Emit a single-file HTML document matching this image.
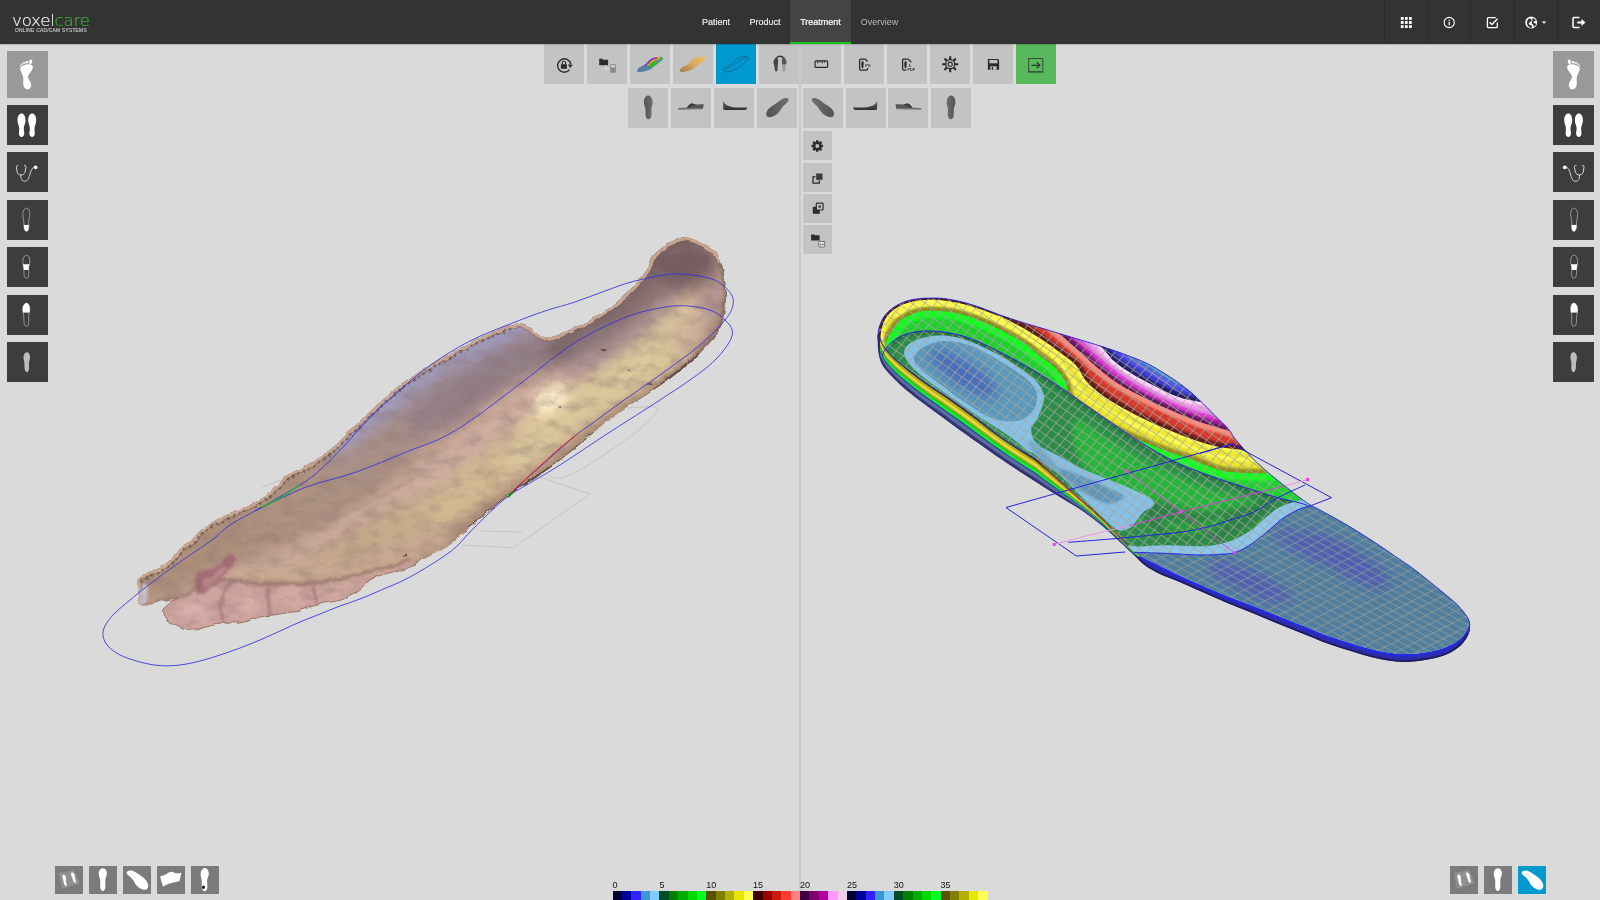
<!DOCTYPE html>
<html lang="en">
<head>
<meta charset="utf-8">
<title>voxelcare - Treatment</title>
<style>
*{box-sizing:border-box;margin:0;padding:0}
html,body{width:1600px;height:900px;overflow:hidden;background:#dadada;font-family:"Liberation Sans",sans-serif;}
#hdr{position:absolute;left:0;top:0;width:1600px;height:43.5px;background:#333;box-shadow:0 .5px 1.5px rgba(0,0,0,.4);z-index:5}
.tab{position:absolute;top:0;height:43.5px;color:#ececec;font-size:9px;line-height:44.6px;-webkit-text-stroke:.2px currentColor;text-align:center;white-space:nowrap}
.tab.act{background:#444;color:#fff;border-bottom:2px solid #17c417}
.tab.dim{color:#b8b8b8;-webkit-text-stroke:0}
.hsep{position:absolute;top:0;width:1px;height:43px;background:#2a2a2a}
.hic{position:absolute;top:0;height:43px}
#logo{position:absolute;left:11.6px;top:11.6px;color:#eee;font-family:"DejaVu Sans","Liberation Sans",sans-serif;font-weight:200;font-size:14.8px;letter-spacing:-0.2px;line-height:17px;white-space:nowrap;-webkit-text-stroke:.22px currentColor;transform:scale(1.125,1.06);transform-origin:0 100%}
#logo b{font-weight:200;color:#3aa832}
#logosub{position:absolute;left:15px;top:27.9px;color:#c4c4c4;font-size:4.9px;letter-spacing:.23px;line-height:6px;white-space:nowrap;font-weight:normal;-webkit-text-stroke:.15px currentColor}
.tb{position:absolute;width:40px;height:40px;background:#c3c3c3}
.tb.blue{background:#0099cf}
.tb.green{background:#57b85c}
.tb svg{position:absolute;left:0;top:0}
.sb{position:absolute;width:29px;height:29px;background:#c3c3c3}
.sb svg{position:absolute;left:0;top:0}
.side{position:absolute;width:40.4px;height:40.4px;background:#3d3d3d}
.side.lt{background:#999;height:47.200px}
.side svg{position:absolute;left:0;top:0}
.bb{position:absolute;width:27.5px;height:27.5px;top:866px;background:#7b7b7b}
.bb.blue{background:#0099cf}
.bb svg{position:absolute;left:0;top:0}
#vdiv{position:absolute;left:799px;top:43px;width:2px;height:857px;background:#c9c9c9}
#scene{position:absolute;left:0;top:0;width:1600px;height:900px}
.lbl{position:absolute;top:879.8px;font-size:9px;line-height:11px;color:#111}
</style>
</head>
<body>
<svg id="scene" width="1600" height="900" viewBox="0 0 1600 900">
<defs>
<clipPath id="footC"><path d="M138.0 590.0C137.8 585.8 137.0 582.0 139.0 579.0C141.0 576.0 145.2 574.8 150.0 572.0C154.8 569.2 163.0 565.8 168.0 562.0C173.0 558.2 176.0 552.7 180.0 549.0C184.0 545.3 188.7 543.0 192.0 540.0C195.3 537.0 195.3 534.7 200.0 531.0C204.7 527.3 211.7 522.3 220.0 518.0C228.3 513.7 241.7 509.3 250.0 505.0C258.3 500.7 263.8 496.8 270.0 492.0C276.2 487.2 281.2 480.3 287.0 476.0C292.8 471.7 297.8 470.3 305.0 466.0C312.2 461.7 321.7 456.7 330.0 450.0C338.3 443.3 347.0 433.7 355.0 426.0C363.0 418.3 370.5 410.8 378.0 404.0C385.5 397.2 393.8 389.8 400.0 385.0C406.2 380.2 409.7 378.5 415.0 375.0C420.3 371.5 426.2 367.5 432.0 364.0C437.8 360.5 442.8 358.0 450.0 354.0C457.2 350.0 467.5 343.8 475.0 340.0C482.5 336.2 489.2 333.5 495.0 331.0C500.8 328.5 505.8 326.2 510.0 325.0C514.2 323.8 516.7 323.5 520.0 324.0C523.3 324.5 526.7 326.2 530.0 328.0C533.3 329.8 536.7 333.4 540.0 335.0C543.3 336.6 545.0 338.3 550.0 337.5C555.0 336.7 563.3 332.9 570.0 330.0C576.7 327.1 583.3 323.8 590.0 320.0C596.7 316.2 604.2 311.7 610.0 307.5C615.8 303.3 620.4 299.2 625.0 295.0C629.6 290.8 633.8 286.7 637.5 282.5C641.2 278.3 644.6 274.1 647.0 270.0C649.4 265.9 649.5 261.7 652.0 258.0C654.5 254.3 658.2 251.0 662.0 248.0C665.8 245.0 671.2 241.8 675.0 240.0C678.8 238.2 680.8 237.2 685.0 237.5C689.2 237.8 695.0 239.8 700.0 242.0C705.0 244.2 711.5 247.7 715.0 251.0C718.5 254.3 719.3 257.2 721.0 262.0C722.7 266.8 724.2 273.7 725.0 280.0C725.8 286.3 726.3 293.3 726.0 300.0C725.7 306.7 724.7 314.2 723.0 320.0C721.3 325.8 719.7 329.7 716.0 335.0C712.3 340.3 706.2 346.7 701.0 352.0C695.8 357.3 691.0 362.0 685.0 367.0C679.0 372.0 671.7 377.3 665.0 382.0C658.3 386.7 651.7 390.7 645.0 395.0C638.3 399.3 631.7 403.4 625.0 408.0C618.3 412.6 611.7 417.2 605.0 422.5C598.3 427.8 592.5 433.8 585.0 440.0C577.5 446.2 568.3 453.6 560.0 460.0C551.7 466.4 543.3 472.8 535.0 478.5C526.7 484.2 517.5 488.8 510.0 494.0C502.5 499.2 496.7 504.5 490.0 510.0C483.3 515.5 476.7 521.3 470.0 527.0C463.3 532.7 456.7 539.3 450.0 544.0C443.3 548.7 437.5 550.8 430.0 555.0C422.5 559.2 412.5 565.8 405.0 569.0C397.5 572.2 390.8 572.2 385.0 574.0C379.2 575.8 374.2 577.3 370.0 580.0C365.8 582.7 365.0 586.7 360.0 590.0C355.0 593.3 346.7 597.7 340.0 600.0C333.3 602.3 326.7 602.3 320.0 604.0C313.3 605.7 306.7 608.3 300.0 610.0C293.3 611.7 286.7 612.8 280.0 614.0C273.3 615.2 266.7 615.5 260.0 617.0C253.3 618.5 246.0 622.2 240.0 623.0C234.0 623.8 229.0 621.5 224.0 622.0C219.0 622.5 215.0 624.7 210.0 626.0C205.0 627.3 199.0 629.8 194.0 630.0C189.0 630.2 184.3 628.7 180.0 627.0C175.7 625.3 170.8 622.8 168.0 620.0C165.2 617.2 162.7 613.0 163.0 610.0C163.3 607.0 167.5 604.0 170.0 602.0C172.5 600.0 179.0 598.2 178.0 598.0C177.0 597.8 169.0 599.3 164.0 600.5C159.0 601.7 152.0 604.4 148.0 605.0C144.0 605.6 141.7 606.5 140.0 604.0C138.3 601.5 138.2 594.2 138.0 590.0Z"/></clipPath>
<filter id="bl8" x="-30%" y="-30%" width="160%" height="160%"><feGaussianBlur stdDeviation="8"/></filter>
<filter id="bl14" x="-30%" y="-30%" width="160%" height="160%"><feGaussianBlur stdDeviation="14"/></filter>
<filter id="bl4" x="-30%" y="-30%" width="160%" height="160%"><feGaussianBlur stdDeviation="4"/></filter>
<filter id="rag" x="-5%" y="-5%" width="110%" height="110%"><feTurbulence type="fractalNoise" baseFrequency="0.11" numOctaves="2" seed="7" result="n"/><feDisplacementMap in="SourceGraphic" in2="n" scale="4.5" xChannelSelector="R" yChannelSelector="G"/></filter>
<filter id="skin" x="0" y="0" width="100%" height="100%"><feTurbulence type="fractalNoise" baseFrequency="0.05 0.09" numOctaves="3" seed="11" result="n"/><feColorMatrix in="n" type="matrix" values="0 0 0 0 0.25  0 0 0 0 0.16  0 0 0 0 0.16  1.5 0 0 0 -0.62"/></filter>
<filter id="bl2" x="-30%" y="-30%" width="160%" height="160%"><feGaussianBlur stdDeviation="1.6"/></filter>
<linearGradient id="footG" gradientUnits="userSpaceOnUse" x1="380" y1="330" x2="470" y2="490"><stop offset="0" stop-color="#8d8195"/><stop offset=".35" stop-color="#a08a8e"/><stop offset=".62" stop-color="#c5a896"/><stop offset=".85" stop-color="#d2bb94"/><stop offset="1" stop-color="#c3a68a"/></linearGradient>
</defs>
<g fill="none" stroke="#c4c4c4" stroke-width="1">
<path d="M262 487L330 462"/>
<path d="M540 477L590 494L513 548L463 545"/>
<path d="M480 531L522 532"/>
<path d="M627 408c12-1 28-2 30 0 3 3 -8 14-22 25-20 15-60 43-74 45-6 1-12-1-12-4"/>
</g>
<g filter="url(#rag)">
<g clip-path="url(#footC)">
<rect x="100" y="220" width="660" height="440" fill="#bc9c88"/>
<path d="M131.0 595.3C128.8 590.6 137.0 579.9 148.0 567.7C159.0 555.5 177.5 536.4 197.0 521.9C216.5 507.4 239.5 499.2 265.0 480.8C290.5 462.4 326.8 419.9 350.0 411.7C373.2 403.5 399.1 416.1 404.5 431.6C409.9 447.1 400.3 484.3 382.5 504.6C364.7 525.0 325.2 540.9 297.5 553.6C269.8 566.3 239.2 574.0 216.5 581.0C193.8 588.1 175.3 593.3 161.0 595.6C146.7 598.0 133.2 599.9 131.0 595.3Z" fill="#ad8f7a" filter="url(#bl8)" opacity="1"/>
<path d="M403.7 408.1C400.5 394.5 410.9 364.1 428.2 347.7C445.5 331.3 484.4 314.2 507.5 309.7C530.5 305.2 547.6 324.7 566.5 320.8C585.4 316.9 607.6 298.3 621.0 286.3C634.4 274.3 639.2 254.8 647.1 248.6C655.0 242.4 665.5 243.5 668.4 249.1C671.3 254.8 670.2 271.0 664.7 282.4C659.2 293.9 649.4 305.1 635.4 317.6C621.4 330.1 599.9 347.2 580.5 357.6C561.1 368.0 541.2 368.1 519.0 380.1C496.8 392.0 466.4 424.5 447.2 429.2C428.0 433.9 406.9 421.6 403.7 408.1Z" fill="#9d8890" filter="url(#bl8)" opacity="1"/>
<path d="M327.6 471.3C323.7 460.4 333.2 432.3 350.0 411.7C366.8 391.1 408.1 356.6 428.2 347.7C448.3 338.8 468.0 346.0 470.9 358.5C473.8 371.0 462.0 402.8 445.7 422.7C429.4 442.5 392.7 469.4 373.0 477.5C353.3 485.6 331.4 482.3 327.6 471.3Z" fill="#a38c8e" filter="url(#bl8)" opacity="0.85"/>
<path d="M241.8 541.3C238.4 533.8 251.1 511.2 270.0 492.0C288.9 472.8 332.8 436.7 355.0 426.0C377.2 415.3 399.9 418.2 403.2 427.7C406.6 437.2 393.9 465.0 375.0 483.2C356.1 501.4 312.2 527.1 290.0 536.8C267.8 546.5 245.1 548.8 241.8 541.3Z" fill="#ad9488" filter="url(#bl8)" opacity="0.6"/>
<path d="M407.9 423.4C406.5 417.4 419.7 399.7 437.3 386.8C454.9 374.0 490.6 353.7 513.5 346.4C536.4 339.1 559.3 342.6 574.9 342.9C590.5 343.2 605.6 345.0 606.9 348.4C608.2 351.8 597.2 357.8 582.6 363.1C568.0 368.4 541.8 370.2 519.0 380.1C496.2 390.0 464.2 415.5 445.7 422.7C427.2 429.9 409.3 429.4 407.9 423.4Z" fill="#8f7b84" filter="url(#bl8)" opacity="0.7"/>
<path d="M320.4 453.9C318.7 449.1 332.0 429.4 350.0 411.7C368.0 394.0 401.9 364.7 428.2 347.7C454.4 330.7 488.0 316.4 507.5 309.7C527.0 303.0 544.3 302.3 545.1 307.4C545.9 312.6 530.7 328.2 512.5 340.3C494.3 352.4 461.2 363.6 435.8 380.3C410.4 397.0 379.2 428.0 360.0 440.3C340.8 452.6 322.0 458.7 320.4 453.9Z" fill="#a09cc2" filter="url(#bl8)" opacity="0.9"/>
<path d="M180.9 596.7C179.6 592.7 195.1 581.7 213.8 572.9C232.5 564.0 265.6 557.0 293.0 543.5C320.4 530.0 351.9 509.2 378.0 491.8C404.1 474.4 425.8 456.6 449.5 439.0C473.1 421.4 497.9 399.1 520.0 386.2C542.1 373.2 562.4 372.1 581.9 361.3C601.4 350.4 621.6 331.1 637.0 321.1C652.4 311.1 664.6 304.5 674.5 301.2C684.5 298.0 694.8 297.7 696.9 301.8C699.0 305.9 694.5 316.4 687.3 325.7C680.1 335.0 669.1 345.9 653.8 357.6C638.5 369.4 616.2 383.3 595.2 396.2C574.2 409.2 550.6 421.0 528.0 435.2C505.4 449.3 482.2 465.7 459.4 481.4C436.5 497.0 416.6 513.7 391.0 529.0C365.4 544.2 334.2 561.4 306.0 572.6C277.8 583.9 242.5 592.5 221.6 596.5C200.7 600.5 182.2 600.6 180.9 596.7Z" fill="#cdaa9e" filter="url(#bl8)" opacity="1"/>
<path d="M364.4 560.4C362.1 554.0 372.6 535.2 388.0 520.4C403.4 505.6 434.0 487.3 457.1 471.6C480.2 455.8 503.8 439.5 526.5 426.0C549.2 412.5 572.3 403.0 593.1 390.7C613.9 378.5 636.2 364.2 651.4 352.4C666.6 340.6 675.2 325.7 684.3 320.0C693.5 314.4 704.1 314.4 706.3 318.6C708.5 322.8 704.9 335.9 697.6 345.4C690.2 355.0 678.0 364.2 662.2 375.9C646.4 387.6 624.0 400.3 602.5 415.6C581.1 430.8 555.8 450.6 533.2 467.3C510.7 484.0 489.3 500.3 467.3 515.6C445.4 530.9 418.7 551.5 401.5 559.0C384.3 566.5 366.6 566.9 364.4 560.4Z" fill="#d2b992" filter="url(#bl8)" opacity="1"/>
<path d="M184.2 609.7C182.8 605.2 198.7 594.0 218.0 585.6C237.3 577.2 272.2 571.5 300.0 559.2C327.8 546.9 363.2 519.3 385.0 511.8C406.8 504.3 428.2 506.9 430.8 514.0C433.2 521.2 419.3 541.6 400.0 554.7C380.7 567.8 343.8 583.1 315.0 592.8C286.2 602.5 248.8 610.1 227.0 612.9C205.2 615.7 185.8 614.3 184.2 609.7Z" fill="#c6a98a" filter="url(#bl8)" opacity="0.9"/>
<path d="M500.1 465.9C498.9 458.0 511.2 435.5 525.5 419.9C539.8 404.3 566.9 387.3 586.1 372.3C605.4 357.3 626.6 342.3 641.0 329.8C655.4 317.3 662.7 301.2 672.6 297.5C682.4 293.7 696.0 299.3 700.1 307.3C704.3 315.3 703.9 334.0 697.6 345.4C691.2 356.9 678.0 364.2 662.2 375.9C646.4 387.6 624.0 400.3 602.5 415.6C581.1 430.8 550.3 458.9 533.2 467.3C516.2 475.7 501.4 473.8 500.1 465.9Z" fill="#dcc69c" filter="url(#bl8)" opacity="1"/>
<path d="M548.5 355.2C546.2 349.0 554.4 332.3 566.5 320.8C578.6 309.3 607.6 298.3 621.0 286.3C634.4 274.3 637.1 257.9 647.1 248.6C657.1 239.3 671.2 233.4 680.7 230.7C690.2 228.0 701.0 228.3 703.9 232.5C706.7 236.7 704.1 246.9 697.9 255.9C691.7 264.9 676.9 275.3 666.7 286.2C656.6 297.1 651.4 309.2 637.0 321.1C622.6 333.0 595.2 351.9 580.5 357.6C565.8 363.3 550.9 361.3 548.5 355.2Z" fill="#766062" filter="url(#bl8)" opacity="0.95"/>
<path d="M556.4 377.8C555.0 374.1 564.8 360.8 577.7 350.2C590.6 339.6 619.6 326.1 633.8 314.1C648.0 302.2 652.7 289.2 662.8 278.7C672.9 268.1 686.0 256.6 694.5 250.9C702.9 245.1 711.8 241.7 713.6 244.2C715.3 246.7 711.3 256.5 704.8 266.0C698.3 275.5 684.8 289.7 674.5 301.2C664.3 312.7 658.1 323.2 643.4 335.0C628.7 346.9 600.6 365.2 586.1 372.3C571.6 379.4 557.8 381.5 556.4 377.8Z" fill="#a98e90" filter="url(#bl8)" opacity="0.9"/>
<ellipse cx="712" cy="318" rx="13" ry="42" transform="rotate(14 712 318)" fill="#b4969a" filter="url(#bl8)"/>
<ellipse cx="690" cy="335" rx="18" ry="26" transform="rotate(40 690 335)" fill="#cdb29a" filter="url(#bl8)" opacity=".9"/>
<path d="M190.0 632.1C189.3 629.9 207.3 623.1 228.5 617.5C249.7 611.8 288.5 607.7 317.5 598.4C346.5 589.1 377.4 575.1 402.5 561.9C427.6 548.6 446.2 534.1 468.1 518.9C490.0 503.6 511.2 487.3 533.8 470.4C556.3 453.4 581.7 432.8 603.2 417.4C624.8 401.9 647.1 389.3 663.0 377.6C678.9 366.0 688.1 360.8 698.5 347.3C709.0 333.8 718.7 308.4 725.9 296.9C733.0 285.3 740.1 276.3 741.2 277.8C742.2 279.4 738.2 292.4 732.3 306.3C726.4 320.2 716.4 347.3 705.9 361.4C695.4 375.5 685.2 379.1 669.0 390.7C652.8 402.3 630.4 414.1 608.5 431.2C586.6 448.3 560.0 474.6 537.5 493.3C515.0 512.0 495.1 528.3 473.8 543.3C452.6 558.3 434.8 571.3 410.0 583.3C385.2 595.3 354.5 607.2 325.0 615.2C295.5 623.2 255.5 628.3 233.0 631.1C210.5 633.9 190.8 634.4 190.0 632.1Z" fill="#a98a72" filter="url(#bl4)" opacity="0.9"/>
<ellipse cx="684" cy="266" rx="36" ry="22" transform="rotate(-15 684 266)" fill="#735c5e" filter="url(#bl8)"/>
<ellipse cx="640" cy="300" rx="36" ry="10" transform="rotate(-40 640 300)" fill="#8a7272" filter="url(#bl8)" opacity=".85"/>
<ellipse cx="590" cy="338" rx="30" ry="8" transform="rotate(-25 590 338)" fill="#8d7a80" filter="url(#bl8)" opacity=".8"/>
<ellipse cx="550" cy="400" rx="22" ry="12" transform="rotate(-35 550 400)" fill="#fbe6c0" filter="url(#bl8)"/>
<ellipse cx="551" cy="400" rx="15" ry="9" transform="rotate(-35 551 400)" fill="#fdebc8" filter="url(#bl4)"/>
<ellipse cx="552" cy="399" rx="9" ry="6" transform="rotate(-35 552 399)" fill="#fff2d4" filter="url(#bl4)"/>
<path d="M196.0 593.0C204.3 590.3 204.0 592.2 208.0 590.0C212.0 587.8 216.0 581.7 220.0 580.0C224.0 578.3 227.7 579.6 232.0 580.0C236.3 580.4 241.0 581.9 246.0 582.5C251.0 583.1 256.3 583.3 262.0 583.5C267.7 583.7 273.7 583.5 280.0 583.5C286.3 583.5 293.3 583.8 300.0 583.5C306.7 583.2 313.3 582.8 320.0 582.0C326.7 581.2 333.3 580.3 340.0 579.0C346.7 577.7 352.5 575.8 360.0 574.0C367.5 572.2 376.7 570.3 385.0 568.0C393.3 565.7 404.2 554.7 410.0 560.0C415.8 565.3 421.7 586.7 420.0 600.0C418.3 613.3 445.0 633.3 400.0 640.0C355.0 646.7 190.3 645.7 150.0 640.0C109.7 634.3 150.3 613.8 158.0 606.0C165.7 598.2 187.7 595.7 196.0 593.0Z" fill="#cfa49f" filter="url(#bl2)"/>
<g filter="url(#bl4)" opacity=".8"><ellipse cx="196" cy="612" rx="18" ry="9" transform="rotate(-12 196 612)" fill="#dcb6b2"/><ellipse cx="248" cy="603" rx="12" ry="9" fill="#d8b4aa"/><ellipse cx="292" cy="598" rx="14" ry="8" fill="#d6b2a6"/><ellipse cx="340" cy="590" rx="16" ry="7" transform="rotate(-12 340 590)" fill="#d0aca0"/></g>
<path d="M240.0 570.0C249.0 567.2 280.0 568.0 300.0 565.0C320.0 562.0 340.0 557.0 360.0 552.0C380.0 547.0 405.0 539.0 420.0 535.0C435.0 531.0 446.7 525.2 450.0 528.0C453.3 530.8 448.3 545.7 440.0 552.0C431.7 558.3 413.3 562.3 400.0 566.0C386.7 569.7 373.3 571.5 360.0 574.0C346.7 576.5 333.3 579.5 320.0 581.0C306.7 582.5 292.3 582.8 280.0 583.0C267.7 583.2 252.7 584.2 246.0 582.0C239.3 579.8 231.0 572.8 240.0 570.0Z" fill="#c9a892" filter="url(#bl4)" opacity=".9"/>
<path d="M198.0 572.0C200.5 569.7 206.3 571.3 210.0 570.0C213.7 568.7 217.0 566.5 220.0 564.0C223.0 561.5 225.3 555.8 228.0 555.0C230.7 554.2 235.8 556.8 236.0 559.0C236.2 561.2 231.5 564.5 229.0 568.0C226.5 571.5 224.5 576.3 221.0 580.0C217.5 583.7 211.8 587.7 208.0 590.0C204.2 592.3 200.2 595.0 198.0 594.0C195.8 593.0 195.0 587.7 195.0 584.0C195.0 580.3 195.5 574.3 198.0 572.0Z" fill="#a36c74" filter="url(#bl2)"/>
<path d="M203.0 578.0C204.3 575.8 208.8 576.8 212.0 575.0C215.2 573.2 219.7 567.8 222.0 567.0C224.3 566.2 227.0 567.5 226.0 570.0C225.0 572.5 219.7 579.0 216.0 582.0C212.3 585.0 206.2 588.7 204.0 588.0C201.8 587.3 201.7 580.2 203.0 578.0Z" fill="#c08c90" filter="url(#bl2)" opacity=".8"/>
<path d="M221.0 580.0C222.8 580.0 227.8 579.6 232.0 580.0C236.2 580.4 241.0 581.9 246.0 582.5C251.0 583.1 256.3 583.3 262.0 583.5C267.7 583.7 273.7 583.5 280.0 583.5C286.3 583.5 293.3 583.8 300.0 583.5C306.7 583.2 313.3 582.8 320.0 582.0C326.7 581.2 333.3 580.3 340.0 579.0C346.7 577.7 352.5 575.8 360.0 574.0C367.5 572.2 376.7 570.3 385.0 568.0C393.3 565.7 405.8 561.3 410.0 560.0" fill="none" stroke="#85605c" stroke-width="2.800" opacity=".7" filter="url(#bl2)"/>
<g fill="none" stroke="#8e5e62" stroke-width="2" opacity=".8" filter="url(#bl2)">
<path d="M232 580c-5 7-10 13-11 22-1 8 1 14 3 20"/><path d="M268 585c-3 8 2 20 2 31"/><path d="M314 585c-1 6 2 12 2 19"/>
</g>
<ellipse cx="143" cy="594" rx="4.500" ry="11" fill="#cfc6dc" filter="url(#bl2)" opacity=".9"/>
<path d="M141.0 604.0C142.5 604.1 146.2 605.2 150.0 604.5C153.8 603.8 159.3 601.2 164.0 600.0C168.7 598.8 173.3 598.8 178.0 597.5C182.7 596.2 189.0 593.9 192.0 592.0C195.0 590.1 195.3 587.0 196.0 586.0" fill="none" stroke="#7c5c58" stroke-width="1.600" opacity=".7" filter="url(#bl2)"/>
<g fill="none" stroke="#fff" stroke-width="1.200" opacity=".16" filter="url(#bl2)"><path d="M470 400c20-8 40-22 60-30"/><path d="M480 412c18-7 36-18 52-26"/><path d="M300 540c30-10 60-30 90-44"/><path d="M420 470c30-16 60-40 90-54"/></g>
<g fill="none" stroke="#5c4650" stroke-width="1.400" opacity=".18" filter="url(#bl2)"><path d="M450 410c20-8 40-22 60-30"/><path d="M330 520c30-10 60-30 90-44"/><path d="M520 360c14-6 24-10 36-12"/></g>
<path d="M470.0 528.0C476.7 522.5 495.0 506.2 510.0 495.0C525.0 483.8 543.3 473.3 560.0 461.0C576.7 448.7 593.3 433.5 610.0 421.0C626.7 408.5 645.0 397.2 660.0 386.0C675.0 374.8 693.3 359.3 700.0 354.0" fill="none" stroke="#453638" stroke-width="3.200" opacity=".85"/>
<path d="M721.0 262.0C721.7 265.0 724.2 273.7 725.0 280.0C725.8 286.3 726.3 293.3 726.0 300.0C725.7 306.7 724.7 314.2 723.0 320.0C721.3 325.8 719.7 329.7 716.0 335.0C712.3 340.3 706.2 346.7 701.0 352.0C695.8 357.3 691.0 362.0 685.0 367.0C679.0 372.0 668.3 379.5 665.0 382.0" fill="none" stroke="#6a5450" stroke-width="5" opacity=".6" filter="url(#bl2)"/>
<rect x="100" y="220" width="660" height="440" filter="url(#skin)" opacity=".55"/>
<g fill="#4c4034" opacity=".75"><ellipse cx="603" cy="350" rx="2.500" ry="1.200"/><ellipse cx="650" cy="385" rx="2" ry="1"/><ellipse cx="405" cy="556" rx="2.500" ry="1.200" transform="rotate(-20 405 556)"/><ellipse cx="628" cy="370" rx="1.500" ry=".8"/><ellipse cx="560" cy="407" rx="1.500" ry=".8"/></g>
</g>
<g clip-path="url(#footC)"><path d="M138.0 590.0C138.2 588.2 137.0 582.0 139.0 579.0C141.0 576.0 145.2 574.8 150.0 572.0C154.8 569.2 163.0 565.8 168.0 562.0C173.0 558.2 176.0 552.7 180.0 549.0C184.0 545.3 188.7 543.0 192.0 540.0C195.3 537.0 195.3 534.7 200.0 531.0C204.7 527.3 211.7 522.3 220.0 518.0C228.3 513.7 241.7 509.3 250.0 505.0C258.3 500.7 263.8 496.8 270.0 492.0C276.2 487.2 281.2 480.3 287.0 476.0C292.8 471.7 297.8 470.3 305.0 466.0C312.2 461.7 321.7 456.7 330.0 450.0C338.3 443.3 347.0 433.7 355.0 426.0C363.0 418.3 370.5 410.8 378.0 404.0C385.5 397.2 393.8 389.8 400.0 385.0C406.2 380.2 409.7 378.5 415.0 375.0C420.3 371.5 426.2 367.5 432.0 364.0C437.8 360.5 442.8 358.0 450.0 354.0C457.2 350.0 467.5 343.8 475.0 340.0C482.5 336.2 489.2 333.5 495.0 331.0C500.8 328.5 505.8 326.2 510.0 325.0C514.2 323.8 516.7 323.5 520.0 324.0C523.3 324.5 526.7 326.2 530.0 328.0C533.3 329.8 536.7 333.4 540.0 335.0C543.3 336.6 545.0 338.3 550.0 337.5C555.0 336.7 563.3 332.9 570.0 330.0C576.7 327.1 583.3 323.8 590.0 320.0C596.7 316.2 604.2 311.7 610.0 307.5C615.8 303.3 620.4 299.2 625.0 295.0C629.6 290.8 633.8 286.7 637.5 282.5C641.2 278.3 644.6 274.1 647.0 270.0C649.4 265.9 649.5 261.7 652.0 258.0C654.5 254.3 658.2 251.0 662.0 248.0C665.8 245.0 671.2 241.8 675.0 240.0C678.8 238.2 680.8 237.2 685.0 237.5C689.2 237.8 695.0 239.8 700.0 242.0C705.0 244.2 711.5 247.7 715.0 251.0C718.5 254.3 720.0 260.2 721.0 262.0" fill="none" stroke="#7a6260" stroke-width="8" opacity=".6"/><path d="M138.0 590.0C138.2 588.2 137.0 582.0 139.0 579.0C141.0 576.0 145.2 574.8 150.0 572.0C154.8 569.2 163.0 565.8 168.0 562.0C173.0 558.2 176.0 552.7 180.0 549.0C184.0 545.3 188.7 543.0 192.0 540.0C195.3 537.0 195.3 534.7 200.0 531.0C204.7 527.3 211.7 522.3 220.0 518.0C228.3 513.7 241.7 509.3 250.0 505.0C258.3 500.7 263.8 496.8 270.0 492.0C276.2 487.2 281.2 480.3 287.0 476.0C292.8 471.7 297.8 470.3 305.0 466.0C312.2 461.7 321.7 456.7 330.0 450.0C338.3 443.3 347.0 433.7 355.0 426.0C363.0 418.3 370.5 410.8 378.0 404.0C385.5 397.2 393.8 389.8 400.0 385.0C406.2 380.2 409.7 378.5 415.0 375.0C420.3 371.5 426.2 367.5 432.0 364.0C437.8 360.5 442.8 358.0 450.0 354.0C457.2 350.0 467.5 343.8 475.0 340.0C482.5 336.2 489.2 333.5 495.0 331.0C500.8 328.5 505.8 326.2 510.0 325.0C514.2 323.8 516.7 323.5 520.0 324.0C523.3 324.5 526.7 326.2 530.0 328.0C533.3 329.8 536.7 333.4 540.0 335.0C543.3 336.6 545.0 338.3 550.0 337.5C555.0 336.7 563.3 332.9 570.0 330.0C576.7 327.1 583.3 323.8 590.0 320.0C596.7 316.2 604.2 311.7 610.0 307.5C615.8 303.3 620.4 299.2 625.0 295.0C629.6 290.8 633.8 286.7 637.5 282.5C641.2 278.3 644.6 274.1 647.0 270.0C649.4 265.9 649.5 261.7 652.0 258.0C654.5 254.3 658.2 251.0 662.0 248.0C665.8 245.0 671.2 241.8 675.0 240.0C678.8 238.2 680.8 237.2 685.0 237.5C689.2 237.8 695.0 239.8 700.0 242.0C705.0 244.2 711.5 247.7 715.0 251.0C718.5 254.3 720.0 260.2 721.0 262.0" fill="none" stroke="#c8a590" stroke-width="6"/></g>
<path d="M430.0 555.0C425.8 557.3 412.5 565.8 405.0 569.0C397.5 572.2 390.8 572.2 385.0 574.0C379.2 575.8 374.2 577.3 370.0 580.0C365.8 582.7 365.0 586.7 360.0 590.0C355.0 593.3 346.7 597.7 340.0 600.0C333.3 602.3 326.7 602.3 320.0 604.0C313.3 605.7 306.7 608.3 300.0 610.0C293.3 611.7 286.7 612.8 280.0 614.0C273.3 615.2 266.7 615.5 260.0 617.0C253.3 618.5 246.0 622.2 240.0 623.0C234.0 623.8 229.0 621.5 224.0 622.0C219.0 622.5 215.0 624.7 210.0 626.0C205.0 627.3 199.0 629.8 194.0 630.0C189.0 630.2 184.3 628.7 180.0 627.0C175.7 625.3 170.8 622.8 168.0 620.0C165.2 617.2 162.7 613.0 163.0 610.0C163.3 607.0 167.5 604.0 170.0 602.0C172.5 600.0 179.0 598.2 178.0 598.0C177.0 597.8 166.3 600.1 164.0 600.5" fill="none" stroke="#8a6a55" stroke-width="1" opacity=".8"/>
<g clip-path="url(#footC)"><path d="M139.0 579.0C140.8 577.8 145.2 574.8 150.0 572.0C154.8 569.2 163.0 565.8 168.0 562.0C173.0 558.2 176.0 552.7 180.0 549.0C184.0 545.3 188.7 543.0 192.0 540.0C195.3 537.0 195.3 534.7 200.0 531.0C204.7 527.3 211.7 522.3 220.0 518.0C228.3 513.7 241.7 509.3 250.0 505.0C258.3 500.7 263.8 496.8 270.0 492.0C276.2 487.2 281.2 480.3 287.0 476.0C292.8 471.7 297.8 470.3 305.0 466.0C312.2 461.7 321.7 456.7 330.0 450.0C338.3 443.3 347.0 433.7 355.0 426.0C363.0 418.3 370.5 410.8 378.0 404.0C385.5 397.2 393.8 389.8 400.0 385.0C406.2 380.2 409.7 378.5 415.0 375.0C420.3 371.5 426.2 367.5 432.0 364.0C437.8 360.5 442.8 358.0 450.0 354.0C457.2 350.0 467.5 343.8 475.0 340.0C482.5 336.2 489.2 333.5 495.0 331.0C500.8 328.5 507.5 326.0 510.0 325.0" fill="none" stroke="#66503f" stroke-width="3" stroke-dasharray="2.500 3.500" opacity=".6" transform="translate(2 3.400)"/></g>
</g>
<path d="M255.0 511.0C250.8 513.3 237.2 520.2 230.0 525.0C222.8 529.8 220.3 533.8 212.0 540.0C203.7 546.2 190.3 554.7 180.0 562.0C169.7 569.3 158.3 577.7 150.0 584.0C141.7 590.3 136.0 595.0 130.0 600.0C124.0 605.0 118.2 609.7 114.0 614.0C109.8 618.3 106.8 622.3 105.0 626.0C103.2 629.7 102.5 632.7 103.0 636.0C103.5 639.3 105.2 642.8 108.0 646.0C110.8 649.2 114.7 652.3 120.0 655.0C125.3 657.7 133.3 660.2 140.0 662.0C146.7 663.8 153.3 665.1 160.0 665.6C166.7 666.1 173.3 665.8 180.0 665.0C186.7 664.2 193.3 662.7 200.0 661.0C206.7 659.3 213.3 657.2 220.0 655.0C226.7 652.8 233.3 650.5 240.0 648.0C246.7 645.5 253.3 642.8 260.0 640.0C266.7 637.2 273.3 634.0 280.0 631.0C286.7 628.0 293.3 624.8 300.0 622.0C306.7 619.2 313.3 616.7 320.0 614.0C326.7 611.3 333.3 608.5 340.0 606.0C346.7 603.5 353.3 601.6 360.0 599.0C366.7 596.4 371.7 594.2 380.0 590.5C388.3 586.8 398.3 583.4 410.0 577.0C421.7 570.6 440.0 559.5 450.0 552.0C460.0 544.5 463.3 538.7 470.0 532.0C476.7 525.3 483.3 518.2 490.0 512.0C496.7 505.8 502.5 500.3 510.0 495.0C517.5 489.7 526.7 485.0 535.0 480.0C543.3 475.0 547.5 473.0 560.0 465.0C572.5 457.0 593.3 442.8 610.0 432.0C626.7 421.2 646.7 408.7 660.0 400.0C673.3 391.3 681.2 386.2 690.0 380.0C698.8 373.8 706.2 368.3 712.5 362.5C718.8 356.7 724.2 350.0 727.5 345.0C730.8 340.0 732.5 336.2 732.5 332.5C732.5 328.8 730.8 326.1 727.5 322.5C724.2 318.9 719.2 313.8 712.5 311.0C705.8 308.2 695.8 306.6 687.5 306.0C679.2 305.4 672.9 305.6 662.5 307.5C652.1 309.4 639.6 311.7 625.0 317.5C610.4 323.3 591.7 332.1 575.0 342.5C558.3 352.9 541.7 367.5 525.0 380.0C508.3 392.5 488.8 407.9 475.0 417.5C461.2 427.1 454.2 431.7 442.5 437.5C430.8 443.3 419.6 446.7 405.0 452.5C390.4 458.3 371.7 466.7 355.0 472.5C338.3 478.3 321.7 481.1 305.0 487.5C288.3 493.9 263.3 507.1 255.0 511.0" fill="none" stroke="#3030e0" stroke-width=".85"/>
<path d="M255.0 511.0C262.5 506.7 289.2 491.8 300.0 485.0C310.8 478.2 312.5 476.7 320.0 470.0C327.5 463.3 337.1 453.3 345.0 445.0C352.9 436.7 358.3 429.2 367.5 420.0C376.7 410.8 389.2 399.3 400.0 390.0C410.8 380.7 420.3 372.2 432.0 364.0C443.7 355.8 457.0 347.7 470.0 341.0C483.0 334.3 497.5 329.0 510.0 324.0C522.5 319.0 534.2 314.7 545.0 311.0C555.8 307.3 565.0 305.3 575.0 302.0C585.0 298.7 595.0 294.5 605.0 291.0C615.0 287.5 623.3 283.8 635.0 281.0C646.7 278.2 662.2 274.3 675.0 274.0C687.8 273.7 702.8 275.9 712.0 279.0C721.2 282.1 726.5 288.2 730.0 292.5C733.5 296.8 733.8 300.4 733.0 305.0C732.2 309.6 730.5 313.3 725.0 320.0C719.5 326.7 710.8 335.8 700.0 345.0C689.2 354.2 673.3 365.3 660.0 375.0C646.7 384.7 631.7 394.7 620.0 403.0C608.3 411.3 597.1 419.8 590.0 425.0C582.9 430.2 584.2 428.5 577.5 434.0C570.8 439.5 558.8 450.3 550.0 458.0C541.2 465.7 531.7 474.0 525.0 480.0C518.3 486.0 512.5 491.7 510.0 494.0" fill="none" stroke="#3030e0" stroke-width=".85"/>
<path d="M577.5 434.0C574.6 436.3 566.2 442.7 560.0 448.0C553.8 453.3 545.8 460.7 540.0 466.0C534.2 471.3 529.7 475.7 525.0 480.0C520.3 484.3 514.2 490.0 512.0 492.0" fill="none" stroke="#f02020" stroke-width="1"/>
<path d="M262.0 507.0C265.0 505.5 273.7 501.7 280.0 498.0C286.3 494.3 296.7 487.2 300.0 485.0" fill="none" stroke="#20c020" stroke-width="1.200"/>
<path d="M508 497l5-5" stroke="#109010" stroke-width="2"/>
<defs>
<clipPath id="silC"><path d="M877.6 339.3C877.6 334.3 878.0 331.0 879.3 326.9C880.6 322.8 882.5 318.1 885.6 314.4C888.7 310.7 893.3 307.2 898.0 304.7C902.7 302.2 907.5 300.4 914.0 299.3C920.5 298.2 929.6 297.7 937.0 298.0C944.4 298.3 951.3 299.4 958.4 301.0C965.5 302.6 972.7 304.9 979.8 307.3C986.9 309.7 993.9 312.8 1001.0 315.3C1008.1 317.8 1015.3 320.2 1022.4 322.4C1029.5 324.6 1036.4 326.5 1043.8 328.7C1051.2 330.9 1058.5 333.3 1066.7 335.8C1075.0 338.3 1084.4 341.0 1093.3 343.8C1102.2 346.6 1111.1 349.4 1120.0 352.7C1128.9 355.9 1138.7 359.4 1146.7 363.3C1154.7 367.2 1161.5 371.7 1168.0 375.8C1174.5 379.9 1180.5 384.1 1185.8 388.2C1191.1 392.3 1195.3 396.2 1200.0 400.7C1204.7 405.1 1209.5 410.2 1214.2 414.9C1218.9 419.6 1224.8 424.9 1228.4 429.0C1232.0 433.1 1231.4 434.6 1235.6 439.6C1239.8 444.6 1247.4 453.1 1253.3 459.0C1259.2 464.9 1265.0 469.9 1271.0 475.0C1277.0 480.1 1283.0 484.7 1289.0 489.3C1295.0 493.9 1300.8 498.9 1306.7 502.7C1312.6 506.5 1318.5 509.1 1324.4 512.4C1330.3 515.6 1336.3 518.8 1342.2 522.2C1348.1 525.6 1354.1 529.3 1360.0 533.0C1365.9 536.7 1371.1 540.0 1377.8 544.4C1384.5 548.8 1393.8 555.3 1400.0 559.6C1406.2 563.9 1408.3 564.9 1415.0 570.0C1421.7 575.1 1432.9 584.2 1440.0 590.0C1447.1 595.8 1452.9 600.4 1457.5 605.0C1462.1 609.6 1465.4 614.2 1467.5 617.5C1469.6 620.8 1469.8 622.2 1470.0 625.0C1470.2 627.8 1470.0 630.7 1468.5 634.0C1467.0 637.3 1464.5 641.7 1461.0 645.0C1457.5 648.3 1453.1 651.6 1447.5 654.0C1441.9 656.4 1435.0 658.2 1427.5 659.5C1420.0 660.8 1410.8 662.2 1402.5 662.0C1394.2 661.8 1385.8 660.2 1377.5 658.5C1369.2 656.8 1360.8 654.0 1352.5 651.5C1344.2 649.0 1335.8 646.5 1327.5 643.5C1319.2 640.5 1310.8 636.8 1302.5 633.5C1294.2 630.2 1285.8 626.9 1277.5 623.5C1269.2 620.1 1260.8 616.4 1252.5 613.0C1244.2 609.6 1235.8 606.5 1227.5 603.0C1219.2 599.5 1210.8 595.7 1202.5 592.0C1194.2 588.3 1184.6 584.0 1177.5 581.0C1170.4 578.0 1165.1 576.4 1160.0 574.0C1154.9 571.6 1150.7 569.4 1146.7 566.6C1142.7 563.8 1140.8 561.4 1136.0 557.0C1131.2 552.6 1124.0 545.5 1118.0 540.0C1112.0 534.5 1106.0 528.9 1100.0 524.0C1094.0 519.1 1088.0 514.6 1082.0 510.5C1076.0 506.4 1069.8 503.1 1064.0 499.5C1058.2 495.9 1055.8 494.6 1047.0 489.0C1038.2 483.4 1022.8 473.7 1011.0 465.8C999.2 457.9 985.3 448.1 976.0 441.5C966.7 434.9 961.5 431.2 955.0 426.5C948.5 421.8 943.0 417.6 937.0 413.2C931.0 408.8 925.2 404.8 919.3 400.3C913.4 395.8 907.2 391.1 901.6 386.0C896.0 380.9 889.3 374.4 885.6 369.6C881.9 364.8 880.6 362.1 879.3 357.0C878.0 351.9 877.6 344.3 877.6 339.3Z"/></clipPath>
<clipPath id="topC"><path d="M877.6 339.3C877.6 337.8 878.0 331.0 879.3 326.9C880.6 322.8 882.5 318.1 885.6 314.4C888.7 310.7 893.3 307.2 898.0 304.7C902.7 302.2 907.5 300.4 914.0 299.3C920.5 298.2 929.6 297.7 937.0 298.0C944.4 298.3 951.3 299.4 958.4 301.0C965.5 302.6 972.7 304.9 979.8 307.3C986.9 309.7 993.9 312.8 1001.0 315.3C1008.1 317.8 1015.3 320.2 1022.4 322.4C1029.5 324.6 1036.4 326.5 1043.8 328.7C1051.2 330.9 1058.5 333.3 1066.7 335.8C1075.0 338.3 1084.4 341.0 1093.3 343.8C1102.2 346.6 1111.1 349.4 1120.0 352.7C1128.9 355.9 1138.7 359.4 1146.7 363.3C1154.7 367.2 1161.5 371.7 1168.0 375.8C1174.5 379.9 1180.5 384.1 1185.8 388.2C1191.1 392.3 1195.3 396.2 1200.0 400.7C1204.7 405.1 1209.5 410.2 1214.2 414.9C1218.9 419.6 1224.8 424.9 1228.4 429.0C1232.0 433.1 1231.4 434.6 1235.6 439.6C1239.8 444.6 1247.4 453.1 1253.3 459.0C1259.2 464.9 1265.0 469.9 1271.0 475.0C1277.0 480.1 1283.0 484.7 1289.0 489.3C1295.0 493.9 1300.8 498.9 1306.7 502.7C1312.6 506.5 1318.5 509.1 1324.4 512.4C1330.3 515.6 1336.3 518.8 1342.2 522.2C1348.1 525.6 1354.1 529.3 1360.0 533.0C1365.9 536.7 1371.1 540.0 1377.8 544.4C1384.5 548.8 1393.8 555.3 1400.0 559.6C1406.2 563.9 1408.3 564.9 1415.0 570.0C1421.7 575.1 1432.9 584.2 1440.0 590.0C1447.1 595.8 1452.9 600.4 1457.5 605.0C1462.1 609.6 1465.4 614.2 1467.5 617.5C1469.6 620.8 1469.8 623.8 1470.0 625.0C1470.2 626.2 1469.7 623.9 1469.0 625.0C1468.3 626.1 1467.7 629.1 1466.0 631.5C1464.3 633.9 1462.3 636.9 1459.0 639.5C1455.7 642.1 1451.2 644.9 1446.0 647.0C1440.8 649.1 1434.8 650.8 1427.5 652.0C1420.2 653.2 1410.8 654.2 1402.5 654.0C1394.2 653.8 1385.8 652.2 1377.5 650.5C1369.2 648.8 1360.8 646.0 1352.5 643.5C1344.2 641.0 1335.8 638.5 1327.5 635.5C1319.2 632.5 1310.8 628.8 1302.5 625.5C1294.2 622.2 1285.8 618.8 1277.5 615.5C1269.2 612.2 1260.8 608.8 1252.5 605.5C1244.2 602.2 1235.8 599.3 1227.5 596.0C1219.2 592.7 1210.6 589.0 1202.5 585.5C1194.4 582.0 1186.5 578.7 1178.7 575.0C1170.9 571.3 1162.1 566.8 1155.6 563.5C1149.1 560.2 1144.2 558.5 1139.6 555.5C1135.0 552.5 1131.6 549.2 1128.0 545.8C1124.4 542.4 1122.5 539.8 1117.8 535.0C1113.1 530.2 1105.9 522.9 1100.0 517.3C1094.1 511.7 1088.1 506.6 1082.2 501.3C1076.3 496.0 1070.3 490.6 1064.4 485.3C1058.5 480.0 1051.4 473.6 1046.7 469.3C1042.0 465.0 1042.0 463.7 1036.0 459.5C1030.0 455.3 1018.1 448.7 1011.0 444.0C1003.9 439.3 998.8 435.6 993.3 431.5C987.8 427.4 982.9 423.3 978.0 419.5C973.1 415.7 969.1 412.6 963.8 408.7C958.5 404.8 951.9 400.2 946.0 396.2C940.1 392.2 934.1 388.8 928.2 384.7C922.3 380.6 916.3 375.9 910.4 371.3C904.5 366.7 897.1 361.1 892.7 357.0C888.3 352.9 886.1 349.9 883.8 346.4C881.5 342.9 880.0 337.0 879.0 335.8C878.0 334.6 877.6 340.8 877.6 339.3Z"/></clipPath>
<pattern id="mesh" width="11.5" height="7.2" patternUnits="userSpaceOnUse" patternTransform="matrix(.875 .485 .891 -.454 900 300)"><path d="M0 3.6H11.5M5.7 0V7.2" stroke="#a4a298" stroke-width=".85" fill="none" opacity=".85"/></pattern>
<pattern id="meshH" width="8.5" height="8" patternUnits="userSpaceOnUse" patternTransform="matrix(.82 .57 .64 -.77 900 300)"><path d="M0 4H8.5M4.2 0V8" stroke="#a8a69a" stroke-width=".85" fill="none" opacity=".85"/></pattern>
<filter id="b3"><feGaussianBlur stdDeviation="3"/></filter>
<filter id="b6" x="-30%" y="-30%" width="160%" height="160%"><feGaussianBlur stdDeviation="6"/></filter>
<filter id="b1"><feGaussianBlur stdDeviation="1.1"/></filter>
</defs>
<g id="insole">
<path d="M877.6 339.3C877.6 334.3 878.0 331.0 879.3 326.9C880.6 322.8 882.5 318.1 885.6 314.4C888.7 310.7 893.3 307.2 898.0 304.7C902.7 302.2 907.5 300.4 914.0 299.3C920.5 298.2 929.6 297.7 937.0 298.0C944.4 298.3 951.3 299.4 958.4 301.0C965.5 302.6 972.7 304.9 979.8 307.3C986.9 309.7 993.9 312.8 1001.0 315.3C1008.1 317.8 1015.3 320.2 1022.4 322.4C1029.5 324.6 1036.4 326.5 1043.8 328.7C1051.2 330.9 1058.5 333.3 1066.7 335.8C1075.0 338.3 1084.4 341.0 1093.3 343.8C1102.2 346.6 1111.1 349.4 1120.0 352.7C1128.9 355.9 1138.7 359.4 1146.7 363.3C1154.7 367.2 1161.5 371.7 1168.0 375.8C1174.5 379.9 1180.5 384.1 1185.8 388.2C1191.1 392.3 1195.3 396.2 1200.0 400.7C1204.7 405.1 1209.5 410.2 1214.2 414.9C1218.9 419.6 1224.8 424.9 1228.4 429.0C1232.0 433.1 1231.4 434.6 1235.6 439.6C1239.8 444.6 1247.4 453.1 1253.3 459.0C1259.2 464.9 1265.0 469.9 1271.0 475.0C1277.0 480.1 1283.0 484.7 1289.0 489.3C1295.0 493.9 1300.8 498.9 1306.7 502.7C1312.6 506.5 1318.5 509.1 1324.4 512.4C1330.3 515.6 1336.3 518.8 1342.2 522.2C1348.1 525.6 1354.1 529.3 1360.0 533.0C1365.9 536.7 1371.1 540.0 1377.8 544.4C1384.5 548.8 1393.8 555.3 1400.0 559.6C1406.2 563.9 1408.3 564.9 1415.0 570.0C1421.7 575.1 1432.9 584.2 1440.0 590.0C1447.1 595.8 1452.9 600.4 1457.5 605.0C1462.1 609.6 1465.4 614.2 1467.5 617.5C1469.6 620.8 1469.8 622.2 1470.0 625.0C1470.2 627.8 1470.0 630.7 1468.5 634.0C1467.0 637.3 1464.5 641.7 1461.0 645.0C1457.5 648.3 1453.1 651.6 1447.5 654.0C1441.9 656.4 1435.0 658.2 1427.5 659.5C1420.0 660.8 1410.8 662.2 1402.5 662.0C1394.2 661.8 1385.8 660.2 1377.5 658.5C1369.2 656.8 1360.8 654.0 1352.5 651.5C1344.2 649.0 1335.8 646.5 1327.5 643.5C1319.2 640.5 1310.8 636.8 1302.5 633.5C1294.2 630.2 1285.8 626.9 1277.5 623.5C1269.2 620.1 1260.8 616.4 1252.5 613.0C1244.2 609.6 1235.8 606.5 1227.5 603.0C1219.2 599.5 1210.8 595.7 1202.5 592.0C1194.2 588.3 1184.6 584.0 1177.5 581.0C1170.4 578.0 1165.1 576.4 1160.0 574.0C1154.9 571.6 1150.7 569.4 1146.7 566.6C1142.7 563.8 1140.8 561.4 1136.0 557.0C1131.2 552.6 1124.0 545.5 1118.0 540.0C1112.0 534.5 1106.0 528.9 1100.0 524.0C1094.0 519.1 1088.0 514.6 1082.0 510.5C1076.0 506.4 1069.8 503.1 1064.0 499.5C1058.2 495.9 1055.8 494.6 1047.0 489.0C1038.2 483.4 1022.8 473.7 1011.0 465.8C999.2 457.9 985.3 448.1 976.0 441.5C966.7 434.9 961.5 431.2 955.0 426.5C948.5 421.8 943.0 417.6 937.0 413.2C931.0 408.8 925.2 404.8 919.3 400.3C913.4 395.8 907.2 391.1 901.6 386.0C896.0 380.9 889.3 374.4 885.6 369.6C881.9 364.8 880.6 362.1 879.3 357.0C878.0 351.9 877.6 344.3 877.6 339.3Z" fill="#2a2a78"/>
<g clip-path="url(#silC)">
<path d="M880.0 337.7L883.0 344.3L886.0 348.7L890.0 353.5L895.0 358.6L900.0 362.6L910.0 370.7L920.0 378.2L930.0 385.6L945.0 395.3L960.0 405.7L975.0 416.9L990.0 428.6L1005.0 439.5L1020.0 449.3L1035.0 458.6L1047.0 469.3L1058.0 479.2L1068.0 488.2L1076.0 495.4L1084.0 502.6L1093.0 510.7L1102.0 519.0L1111.0 527.9L1120.0 537.0L1130.0 547.2L1140.0 555.4L1140.0 556.4L1130.0 548.1L1120.0 538.0L1111.0 529.0L1102.0 520.1L1093.0 511.9L1084.0 503.9L1076.0 496.9L1068.0 489.9L1058.0 481.1L1047.0 471.4L1035.0 461.0L1020.0 451.6L1005.0 441.8L990.0 431.0L975.0 419.4L960.0 408.3L945.0 397.7L930.0 387.9L920.0 380.6L910.0 373.0L900.0 364.9L895.0 360.8L890.0 355.7L886.0 351.0L883.0 346.5L880.0 339.9Z" fill="#4a2418"/>
<path d="M880.0 339.3L883.0 345.9L886.0 350.4L890.0 355.1L895.0 360.2L900.0 364.3L910.0 372.4L920.0 380.0L930.0 387.3L945.0 397.1L960.0 407.7L975.0 418.8L990.0 430.4L1005.0 441.2L1020.0 451.0L1035.0 460.4L1047.0 470.8L1058.0 480.5L1068.0 489.3L1076.0 496.3L1084.0 503.3L1093.0 511.3L1102.0 519.5L1111.0 528.4L1120.0 537.4L1130.0 547.5L1140.0 555.8L1140.0 557.0L1130.0 548.5L1120.0 538.5L1111.0 529.6L1102.0 520.9L1093.0 512.9L1084.0 505.0L1076.0 498.2L1068.0 491.5L1058.0 483.1L1047.0 473.8L1035.0 463.7L1020.0 454.3L1005.0 444.4L990.0 433.7L975.0 422.2L960.0 411.1L945.0 400.6L930.0 390.6L920.0 383.3L910.0 375.6L900.0 367.5L895.0 363.2L890.0 358.1L886.0 353.5L883.0 348.9L880.0 342.4Z" fill="#b8ae20"/>
<path d="M880.0 341.8L883.0 348.3L886.0 352.9L890.0 357.5L895.0 362.6L900.0 366.9L910.0 375.0L920.0 382.7L930.0 390.0L945.0 400.0L960.0 410.5L975.0 421.6L990.0 433.1L1005.0 443.8L1020.0 453.7L1035.0 463.1L1047.0 473.2L1058.0 482.5L1068.0 490.9L1076.0 497.6L1084.0 504.4L1093.0 512.3L1102.0 520.3L1111.0 529.0L1120.0 537.9L1130.0 547.9L1140.0 556.4L1140.0 557.7L1130.0 549.1L1120.0 539.2L1111.0 530.4L1102.0 521.8L1093.0 513.9L1084.0 506.3L1076.0 499.8L1068.0 493.4L1058.0 485.3L1047.0 476.5L1035.0 466.8L1020.0 457.4L1005.0 447.5L990.0 436.8L975.0 425.5L960.0 414.5L945.0 403.9L930.0 393.7L920.0 386.4L910.0 378.7L900.0 370.5L895.0 366.1L890.0 361.0L886.0 356.5L883.0 351.7L880.0 345.2Z" fill="#e4dc38"/>
<path d="M880.0 344.6L883.0 351.1L886.0 355.9L890.0 360.4L895.0 365.5L900.0 369.9L910.0 378.1L920.0 385.8L930.0 393.1L945.0 403.3L960.0 413.9L975.0 424.9L990.0 436.2L1005.0 446.9L1020.0 456.8L1035.0 466.2L1047.0 475.9L1058.0 484.7L1068.0 492.8L1076.0 499.2L1084.0 505.7L1093.0 513.3L1102.0 521.2L1111.0 529.8L1120.0 538.6L1130.0 548.5L1140.0 557.1L1140.0 558.1L1130.0 549.4L1120.0 539.5L1111.0 530.9L1102.0 522.3L1093.0 514.6L1084.0 507.0L1076.0 500.7L1068.0 494.5L1058.0 486.7L1047.0 478.0L1035.0 468.6L1020.0 459.1L1005.0 449.2L990.0 438.6L975.0 427.4L960.0 416.4L945.0 405.7L930.0 395.5L920.0 388.2L910.0 380.4L900.0 372.2L895.0 367.7L890.0 362.6L886.0 358.1L883.0 353.2L880.0 346.9Z" fill="#b4a820"/>
<path d="M880.0 346.3L883.0 352.6L886.0 357.5L890.0 362.0L895.0 367.1L900.0 371.6L910.0 379.8L920.0 387.6L930.0 394.9L945.0 405.1L960.0 415.8L975.0 426.8L990.0 438.0L1005.0 448.6L1020.0 458.5L1035.0 468.0L1047.0 477.4L1058.0 486.1L1068.0 493.9L1076.0 500.1L1084.0 506.4L1093.0 514.0L1102.0 521.7L1111.0 530.3L1120.0 538.9L1130.0 548.8L1140.0 557.5L1140.0 558.4L1130.0 549.7L1120.0 539.9L1111.0 531.3L1102.0 522.8L1093.0 515.2L1084.0 507.8L1076.0 501.6L1068.0 495.5L1058.0 488.0L1047.0 479.6L1035.0 470.4L1020.0 460.9L1005.0 451.0L990.0 440.4L975.0 429.3L960.0 418.4L945.0 407.6L930.0 397.3L920.0 390.0L910.0 382.2L900.0 373.9L895.0 369.3L890.0 364.2L886.0 359.8L883.0 354.8L880.0 348.5Z" fill="#20c828"/>
<path d="M880.0 347.9L883.0 354.2L886.0 359.2L890.0 363.6L895.0 368.7L900.0 373.3L910.0 381.6L920.0 389.4L930.0 396.7L945.0 407.0L960.0 417.8L975.0 428.7L990.0 439.8L1005.0 450.4L1020.0 460.3L1035.0 469.8L1047.0 479.0L1058.0 487.4L1068.0 494.9L1076.0 501.0L1084.0 507.2L1093.0 514.6L1102.0 522.2L1111.0 530.7L1120.0 539.3L1130.0 549.1L1140.0 557.8L1140.0 559.0L1130.0 550.2L1120.0 540.5L1111.0 532.0L1102.0 523.6L1093.0 516.1L1084.0 508.8L1076.0 502.9L1068.0 497.1L1058.0 489.9L1047.0 481.9L1035.0 473.1L1020.0 463.5L1005.0 453.6L990.0 443.0L975.0 432.1L960.0 421.2L945.0 410.5L930.0 399.9L920.0 392.6L910.0 384.8L900.0 376.5L895.0 371.8L890.0 366.7L886.0 362.3L883.0 357.2L880.0 351.0Z" fill="#18ee28"/>
<path d="M880.0 350.4L883.0 356.6L886.0 361.7L890.0 366.1L895.0 371.2L900.0 375.9L910.0 384.2L920.0 392.0L930.0 399.3L945.0 409.9L960.0 420.6L975.0 431.5L990.0 442.4L1005.0 453.0L1020.0 462.9L1035.0 472.5L1047.0 481.3L1058.0 489.3L1068.0 496.5L1076.0 502.3L1084.0 508.2L1093.0 515.5L1102.0 523.0L1111.0 531.4L1120.0 539.9L1130.0 549.6L1140.0 558.4L1140.0 559.3L1130.0 550.4L1120.0 540.7L1111.0 532.3L1102.0 524.0L1093.0 516.6L1084.0 509.4L1076.0 503.6L1068.0 498.0L1058.0 490.9L1047.0 483.1L1035.0 474.4L1020.0 464.9L1005.0 454.9L990.0 444.4L975.0 433.5L960.0 422.7L945.0 411.9L930.0 401.3L920.0 394.0L910.0 386.1L900.0 377.8L895.0 373.0L890.0 367.9L886.0 363.6L883.0 358.4L880.0 352.2Z" fill="#2040c0"/>
<path d="M880.0 351.6L883.0 357.8L886.0 363.0L890.0 367.3L895.0 372.4L900.0 377.2L910.0 385.5L920.0 393.4L930.0 400.7L945.0 411.3L960.0 422.1L975.0 432.9L990.0 443.8L1005.0 454.3L1020.0 464.3L1035.0 473.8L1047.0 482.5L1058.0 490.3L1068.0 497.4L1076.0 503.0L1084.0 508.8L1093.0 516.0L1102.0 523.4L1111.0 531.7L1120.0 540.1L1130.0 549.8L1140.0 558.7L1140.0 560.2L1130.0 551.1L1120.0 541.6L1111.0 533.3L1102.0 525.2L1093.0 518.0L1084.0 511.0L1076.0 505.6L1068.0 500.4L1058.0 493.8L1047.0 486.6L1035.0 478.4L1020.0 468.8L1005.0 458.9L990.0 448.4L975.0 437.8L960.0 427.0L945.0 416.1L930.0 405.3L920.0 398.0L910.0 390.0L900.0 381.7L895.0 376.7L890.0 371.6L886.0 367.4L883.0 361.9L880.0 355.8Z" fill="#5a6e98"/>
<path d="M880.0 355.2L883.0 361.3L886.0 366.8L890.0 371.0L895.0 376.1L900.0 381.1L910.0 389.4L920.0 397.4L930.0 404.7L945.0 415.5L960.0 426.4L975.0 437.2L990.0 447.8L1005.0 458.3L1020.0 468.2L1035.0 477.8L1047.0 486.0L1058.0 493.2L1068.0 499.8L1076.0 505.0L1084.0 510.4L1093.0 517.4L1102.0 524.6L1111.0 532.7L1120.0 541.0L1130.0 550.5L1140.0 559.6L1140.0 560.9L1130.0 551.6L1120.0 542.2L1111.0 534.1L1102.0 526.1L1093.0 519.0L1084.0 512.3L1076.0 507.1L1068.0 502.2L1058.0 496.1L1047.0 489.3L1035.0 481.6L1020.0 471.9L1005.0 461.9L990.0 451.5L975.0 441.1L960.0 430.4L945.0 419.4L930.0 408.4L920.0 401.1L910.0 393.1L900.0 384.7L895.0 379.5L890.0 374.4L886.0 370.3L883.0 364.7L880.0 358.7Z" fill="#34347c"/>
<path d="M1139.6 555.5C1142.3 556.8 1149.1 560.2 1155.6 563.5C1162.1 566.8 1170.9 571.3 1178.7 575.0C1186.5 578.7 1194.4 582.0 1202.5 585.5C1210.6 589.0 1219.2 592.7 1227.5 596.0C1235.8 599.3 1244.2 602.2 1252.5 605.5C1260.8 608.8 1269.2 612.2 1277.5 615.5C1285.8 618.8 1294.2 622.2 1302.5 625.5C1310.8 628.8 1319.2 632.5 1327.5 635.5C1335.8 638.5 1344.2 641.0 1352.5 643.5C1360.8 646.0 1369.2 648.8 1377.5 650.5C1385.8 652.2 1394.2 653.8 1402.5 654.0C1410.8 654.2 1420.2 653.2 1427.5 652.0C1434.8 650.8 1440.8 649.1 1446.0 647.0C1451.2 644.9 1455.7 642.1 1459.0 639.5C1462.3 636.9 1464.3 633.9 1466.0 631.5C1467.7 629.1 1468.5 626.1 1469.0 625.0" fill="none" stroke="#2c2cae" stroke-width="8" transform="translate(-0.5 3.2)"/>
<path d="M1139.6 555.5C1142.3 556.8 1149.1 560.2 1155.6 563.5C1162.1 566.8 1170.9 571.3 1178.7 575.0C1186.5 578.7 1194.4 582.0 1202.5 585.5C1210.6 589.0 1219.2 592.7 1227.5 596.0C1235.8 599.3 1244.2 602.2 1252.5 605.5C1260.8 608.8 1269.2 612.2 1277.5 615.5C1285.8 618.8 1294.2 622.2 1302.5 625.5C1310.8 628.8 1319.2 632.5 1327.5 635.5C1335.8 638.5 1344.2 641.0 1352.5 643.5C1360.8 646.0 1369.2 648.8 1377.5 650.5C1385.8 652.2 1394.2 653.8 1402.5 654.0C1410.8 654.2 1420.2 653.2 1427.5 652.0C1434.8 650.8 1440.8 649.1 1446.0 647.0C1451.2 644.9 1455.7 642.1 1459.0 639.5C1462.3 636.9 1464.3 633.9 1466.0 631.5C1467.7 629.1 1468.5 626.1 1469.0 625.0" fill="none" stroke="#2828ee" stroke-width="2.600" transform="translate(-0.3 1)"/>
<path d="M1136.0 557.0C1137.8 558.6 1142.7 563.8 1146.7 566.6C1150.7 569.4 1154.9 571.6 1160.0 574.0C1165.1 576.4 1170.4 578.0 1177.5 581.0C1184.6 584.0 1194.2 588.3 1202.5 592.0C1210.8 595.7 1219.2 599.5 1227.5 603.0C1235.8 606.5 1244.2 609.6 1252.5 613.0C1260.8 616.4 1269.2 620.1 1277.5 623.5C1285.8 626.9 1294.2 630.2 1302.5 633.5C1310.8 636.8 1319.2 640.5 1327.5 643.5C1335.8 646.5 1344.2 649.0 1352.5 651.5C1360.8 654.0 1369.2 656.8 1377.5 658.5C1385.8 660.2 1394.2 661.8 1402.5 662.0C1410.8 662.2 1420.0 660.8 1427.5 659.5C1435.0 658.2 1441.9 656.4 1447.5 654.0C1453.1 651.6 1457.5 648.3 1461.0 645.0C1464.5 641.7 1467.2 635.8 1468.5 634.0" fill="none" stroke="#1c1c58" stroke-width="3.400" opacity=".9"/>
</g>
<g clip-path="url(#topC)">
<path d="M877.6 339.3C877.6 337.8 878.0 331.0 879.3 326.9C880.6 322.8 882.5 318.1 885.6 314.4C888.7 310.7 893.3 307.2 898.0 304.7C902.7 302.2 907.5 300.4 914.0 299.3C920.5 298.2 929.6 297.7 937.0 298.0C944.4 298.3 951.3 299.4 958.4 301.0C965.5 302.6 972.7 304.9 979.8 307.3C986.9 309.7 993.9 312.8 1001.0 315.3C1008.1 317.8 1015.3 320.2 1022.4 322.4C1029.5 324.6 1036.4 326.5 1043.8 328.7C1051.2 330.9 1058.5 333.3 1066.7 335.8C1075.0 338.3 1084.4 341.0 1093.3 343.8C1102.2 346.6 1111.1 349.4 1120.0 352.7C1128.9 355.9 1138.7 359.4 1146.7 363.3C1154.7 367.2 1161.5 371.7 1168.0 375.8C1174.5 379.9 1180.5 384.1 1185.8 388.2C1191.1 392.3 1195.3 396.2 1200.0 400.7C1204.7 405.1 1209.5 410.2 1214.2 414.9C1218.9 419.6 1224.8 424.9 1228.4 429.0C1232.0 433.1 1231.4 434.6 1235.6 439.6C1239.8 444.6 1247.4 453.1 1253.3 459.0C1259.2 464.9 1265.0 469.9 1271.0 475.0C1277.0 480.1 1283.0 484.7 1289.0 489.3C1295.0 493.9 1300.8 498.9 1306.7 502.7C1312.6 506.5 1318.5 509.1 1324.4 512.4C1330.3 515.6 1336.3 518.8 1342.2 522.2C1348.1 525.6 1354.1 529.3 1360.0 533.0C1365.9 536.7 1371.1 540.0 1377.8 544.4C1384.5 548.8 1393.8 555.3 1400.0 559.6C1406.2 563.9 1408.3 564.9 1415.0 570.0C1421.7 575.1 1432.9 584.2 1440.0 590.0C1447.1 595.8 1452.9 600.4 1457.5 605.0C1462.1 609.6 1465.4 614.2 1467.5 617.5C1469.6 620.8 1469.8 623.8 1470.0 625.0C1470.2 626.2 1469.7 623.9 1469.0 625.0C1468.3 626.1 1467.7 629.1 1466.0 631.5C1464.3 633.9 1462.3 636.9 1459.0 639.5C1455.7 642.1 1451.2 644.9 1446.0 647.0C1440.8 649.1 1434.8 650.8 1427.5 652.0C1420.2 653.2 1410.8 654.2 1402.5 654.0C1394.2 653.8 1385.8 652.2 1377.5 650.5C1369.2 648.8 1360.8 646.0 1352.5 643.5C1344.2 641.0 1335.8 638.5 1327.5 635.5C1319.2 632.5 1310.8 628.8 1302.5 625.5C1294.2 622.2 1285.8 618.8 1277.5 615.5C1269.2 612.2 1260.8 608.8 1252.5 605.5C1244.2 602.2 1235.8 599.3 1227.5 596.0C1219.2 592.7 1210.6 589.0 1202.5 585.5C1194.4 582.0 1186.5 578.7 1178.7 575.0C1170.9 571.3 1162.1 566.8 1155.6 563.5C1149.1 560.2 1144.2 558.5 1139.6 555.5C1135.0 552.5 1131.6 549.2 1128.0 545.8C1124.4 542.4 1122.5 539.8 1117.8 535.0C1113.1 530.2 1105.9 522.9 1100.0 517.3C1094.1 511.7 1088.1 506.6 1082.2 501.3C1076.3 496.0 1070.3 490.6 1064.4 485.3C1058.5 480.0 1051.4 473.6 1046.7 469.3C1042.0 465.0 1042.0 463.7 1036.0 459.5C1030.0 455.3 1018.1 448.7 1011.0 444.0C1003.9 439.3 998.8 435.6 993.3 431.5C987.8 427.4 982.9 423.3 978.0 419.5C973.1 415.7 969.1 412.6 963.8 408.7C958.5 404.8 951.9 400.2 946.0 396.2C940.1 392.2 934.1 388.8 928.2 384.7C922.3 380.6 916.3 375.9 910.4 371.3C904.5 366.7 897.1 361.1 892.7 357.0C888.3 352.9 886.1 349.9 883.8 346.4C881.5 342.9 880.0 337.0 879.0 335.8C878.0 334.6 877.6 340.8 877.6 339.3Z" fill="#4a1c18"/>
<clipPath id="r2"><path d="M990.0 308.0C992.5 309.5 998.7 313.6 1004.7 317.0C1010.7 320.4 1019.5 324.7 1026.0 328.7C1032.5 332.7 1038.5 337.3 1043.8 341.0C1049.1 344.7 1052.5 346.9 1057.8 350.9C1063.1 354.9 1070.9 360.0 1075.6 365.0C1080.3 370.0 1081.6 375.9 1086.0 381.0C1090.4 386.1 1095.7 390.5 1102.2 395.3C1108.8 400.1 1117.3 405.2 1125.3 409.6C1133.3 414.1 1141.7 418.1 1150.0 422.0C1158.3 425.9 1166.7 429.4 1175.0 432.7C1183.3 436.0 1192.9 439.7 1200.0 442.0C1207.1 444.3 1211.9 445.5 1217.8 446.7C1223.7 447.9 1229.9 448.6 1235.6 449.3C1241.3 450.0 1249.3 450.7 1252.0 451.0L1270.0 430.0L1180.0 350.0L1000.0 295.0Z"/></clipPath>
<g clip-path="url(#r2)">
<path d="M990.0 308.0C992.5 309.5 998.7 313.6 1004.7 317.0C1010.7 320.4 1019.5 324.7 1026.0 328.7C1032.5 332.7 1038.5 337.3 1043.8 341.0C1049.1 344.7 1052.5 346.9 1057.8 350.9C1063.1 354.9 1070.9 360.0 1075.6 365.0C1080.3 370.0 1081.6 375.9 1086.0 381.0C1090.4 386.1 1095.7 390.5 1102.2 395.3C1108.8 400.1 1117.3 405.2 1125.3 409.6C1133.3 414.1 1141.7 418.1 1150.0 422.0C1158.3 425.9 1166.7 429.4 1175.0 432.7C1183.3 436.0 1192.9 439.7 1200.0 442.0C1207.1 444.3 1211.9 445.5 1217.8 446.7C1223.7 447.9 1229.9 448.6 1235.6 449.3C1241.3 450.0 1249.3 450.7 1252.0 451.0L1270.0 430.0L1180.0 350.0L1000.0 295.0Z" fill="#d63a2c"/>
<path d="M990.0 308.0C992.5 309.5 998.7 313.6 1004.7 317.0C1010.7 320.4 1019.5 324.7 1026.0 328.7C1032.5 332.7 1038.5 337.3 1043.8 341.0C1049.1 344.7 1052.5 346.9 1057.8 350.9C1063.1 354.9 1070.9 360.0 1075.6 365.0C1080.3 370.0 1081.6 375.9 1086.0 381.0C1090.4 386.1 1095.7 390.5 1102.2 395.3C1108.8 400.1 1117.3 405.2 1125.3 409.6C1133.3 414.1 1141.7 418.1 1150.0 422.0C1158.3 425.9 1166.7 429.4 1175.0 432.7C1183.3 436.0 1192.9 439.7 1200.0 442.0C1207.1 444.3 1211.9 445.5 1217.8 446.7C1223.7 447.9 1229.9 448.6 1235.6 449.3C1241.3 450.0 1249.3 450.7 1252.0 451.0" fill="none" stroke="#5c1c1a" stroke-width="9" filter="url(#b1)"/>
<path d="M1050.0 326.0C1052.2 327.8 1058.2 332.6 1063.0 336.7C1067.8 340.8 1073.0 345.6 1079.0 350.9C1085.0 356.2 1091.9 363.1 1098.7 368.7C1105.5 374.3 1112.0 379.7 1120.0 384.7C1128.0 389.7 1137.8 394.5 1146.7 398.9C1155.6 403.3 1164.4 407.4 1173.3 411.3C1182.2 415.2 1191.7 419.1 1200.0 422.0C1208.3 424.9 1216.3 427.0 1223.0 429.0C1229.7 431.0 1237.2 433.2 1240.0 434.0" fill="none" stroke="#ff8a7a" stroke-width="11" filter="url(#b1)"/>
</g>
<clipPath id="r3"><path d="M1050.0 326.0C1052.2 327.8 1058.2 332.6 1063.0 336.7C1067.8 340.8 1073.0 345.6 1079.0 350.9C1085.0 356.2 1091.9 363.1 1098.7 368.7C1105.5 374.3 1112.0 379.7 1120.0 384.7C1128.0 389.7 1137.8 394.5 1146.7 398.9C1155.6 403.3 1164.4 407.4 1173.3 411.3C1182.2 415.2 1191.7 419.1 1200.0 422.0C1208.3 424.9 1216.3 427.0 1223.0 429.0C1229.7 431.0 1237.2 433.2 1240.0 434.0L1270.0 430.0L1180.0 350.0L1000.0 295.0Z"/></clipPath>
<g clip-path="url(#r3)">
<path d="M1050.0 326.0C1052.2 327.8 1058.2 332.6 1063.0 336.7C1067.8 340.8 1073.0 345.6 1079.0 350.9C1085.0 356.2 1091.9 363.1 1098.7 368.7C1105.5 374.3 1112.0 379.7 1120.0 384.7C1128.0 389.7 1137.8 394.5 1146.7 398.9C1155.6 403.3 1164.4 407.4 1173.3 411.3C1182.2 415.2 1191.7 419.1 1200.0 422.0C1208.3 424.9 1216.3 427.0 1223.0 429.0C1229.7 431.0 1237.2 433.2 1240.0 434.0L1270.0 430.0L1180.0 350.0L1000.0 295.0Z" fill="#b018a8"/>
<path d="M1050.0 326.0C1052.2 327.8 1058.2 332.6 1063.0 336.7C1067.8 340.8 1073.0 345.6 1079.0 350.9C1085.0 356.2 1091.9 363.1 1098.7 368.7C1105.5 374.3 1112.0 379.7 1120.0 384.7C1128.0 389.7 1137.8 394.5 1146.7 398.9C1155.6 403.3 1164.4 407.4 1173.3 411.3C1182.2 415.2 1191.7 419.1 1200.0 422.0C1208.3 424.9 1216.3 427.0 1223.0 429.0C1229.7 431.0 1237.2 433.2 1240.0 434.0" fill="none" stroke="#5a1a5a" stroke-width="7" filter="url(#b1)"/>
<path d="M1075.0 335.0C1076.9 336.6 1081.7 340.6 1086.2 344.7C1090.7 348.8 1096.6 354.9 1102.2 359.8C1107.8 364.7 1113.8 369.6 1120.0 374.0C1126.2 378.4 1132.2 382.2 1139.6 386.4C1147.0 390.5 1155.8 395.0 1164.4 398.9C1173.0 402.8 1183.3 406.9 1191.0 409.6C1198.7 412.3 1205.0 413.5 1210.7 414.9C1216.4 416.3 1222.6 417.5 1225.0 418.0" fill="none" stroke="#e040d8" stroke-width="7" filter="url(#b1)"/>
</g>
<clipPath id="r4"><path d="M1075.0 335.0C1076.9 336.6 1081.7 340.6 1086.2 344.7C1090.7 348.8 1096.6 354.9 1102.2 359.8C1107.8 364.7 1113.8 369.6 1120.0 374.0C1126.2 378.4 1132.2 382.2 1139.6 386.4C1147.0 390.5 1155.8 395.0 1164.4 398.9C1173.0 402.8 1183.3 406.9 1191.0 409.6C1198.7 412.3 1205.0 413.5 1210.7 414.9C1216.4 416.3 1222.6 417.5 1225.0 418.0L1270.0 430.0L1180.0 350.0L1000.0 295.0Z"/></clipPath>
<g clip-path="url(#r4)">
<path d="M1075.0 335.0C1076.9 336.6 1081.7 340.6 1086.2 344.7C1090.7 348.8 1096.6 354.9 1102.2 359.8C1107.8 364.7 1113.8 369.6 1120.0 374.0C1126.2 378.4 1132.2 382.2 1139.6 386.4C1147.0 390.5 1155.8 395.0 1164.4 398.9C1173.0 402.8 1183.3 406.9 1191.0 409.6C1198.7 412.3 1205.0 413.5 1210.7 414.9C1216.4 416.3 1222.6 417.5 1225.0 418.0L1270.0 430.0L1180.0 350.0L1000.0 295.0Z" fill="#f29af0"/>
<path d="M1075.0 335.0C1076.9 336.6 1081.7 340.6 1086.2 344.7C1090.7 348.8 1096.6 354.9 1102.2 359.8C1107.8 364.7 1113.8 369.6 1120.0 374.0C1126.2 378.4 1132.2 382.2 1139.6 386.4C1147.0 390.5 1155.8 395.0 1164.4 398.9C1173.0 402.8 1183.3 406.9 1191.0 409.6C1198.7 412.3 1205.0 413.5 1210.7 414.9C1216.4 416.3 1222.6 417.5 1225.0 418.0" fill="none" stroke="#e070e0" stroke-width="3" filter="url(#b1)"/>
<path d="M1093.0 339.0C1094.4 340.2 1097.7 342.6 1101.3 346.4C1104.9 350.2 1109.5 357.0 1114.7 361.6C1119.9 366.2 1125.6 369.9 1132.4 374.0C1139.2 378.1 1147.9 382.6 1155.6 386.4C1163.3 390.2 1171.6 394.5 1178.7 397.0C1185.8 399.5 1193.0 400.6 1198.2 401.6C1203.4 402.6 1208.0 402.8 1210.0 403.0" fill="none" stroke="#ffdcff" stroke-width="7" filter="url(#b1)"/>
</g>
<clipPath id="r5"><path d="M1093.0 339.0C1094.4 340.2 1097.7 342.6 1101.3 346.4C1104.9 350.2 1109.5 357.0 1114.7 361.6C1119.9 366.2 1125.6 369.9 1132.4 374.0C1139.2 378.1 1147.9 382.6 1155.6 386.4C1163.3 390.2 1171.6 394.5 1178.7 397.0C1185.8 399.5 1193.0 400.6 1198.2 401.6C1203.4 402.6 1208.0 402.8 1210.0 403.0L1270.0 430.0L1180.0 350.0L1000.0 295.0Z"/></clipPath>
<g clip-path="url(#r5)">
<path d="M1093.0 339.0C1094.4 340.2 1097.7 342.6 1101.3 346.4C1104.9 350.2 1109.5 357.0 1114.7 361.6C1119.9 366.2 1125.6 369.9 1132.4 374.0C1139.2 378.1 1147.9 382.6 1155.6 386.4C1163.3 390.2 1171.6 394.5 1178.7 397.0C1185.8 399.5 1193.0 400.6 1198.2 401.6C1203.4 402.6 1208.0 402.8 1210.0 403.0L1270.0 430.0L1180.0 350.0L1000.0 295.0Z" fill="#2a2a8c"/>
<path d="M1093.0 339.0C1094.4 340.2 1097.7 342.6 1101.3 346.4C1104.9 350.2 1109.5 357.0 1114.7 361.6C1119.9 366.2 1125.6 369.9 1132.4 374.0C1139.2 378.1 1147.9 382.6 1155.6 386.4C1163.3 390.2 1171.6 394.5 1178.7 397.0C1185.8 399.5 1193.0 400.6 1198.2 401.6C1203.4 402.6 1208.0 402.8 1210.0 403.0" fill="none" stroke="#1c1c5c" stroke-width="5" filter="url(#b1)"/>
</g>
<clipPath id="r6"><path d="M1104.0 343.0C1105.2 344.3 1107.5 347.5 1111.0 350.9C1114.5 354.3 1119.3 358.9 1125.3 363.3C1131.2 367.8 1139.6 373.5 1146.7 377.6C1153.8 381.8 1161.2 385.2 1168.0 388.2C1174.8 391.1 1182.3 393.7 1187.6 395.3C1192.9 396.9 1197.9 397.6 1200.0 398.0L1270.0 430.0L1180.0 350.0L1000.0 295.0Z"/></clipPath>
<g clip-path="url(#r6)">
<path d="M1104.0 343.0C1105.2 344.3 1107.5 347.5 1111.0 350.9C1114.5 354.3 1119.3 358.9 1125.3 363.3C1131.2 367.8 1139.6 373.5 1146.7 377.6C1153.8 381.8 1161.2 385.2 1168.0 388.2C1174.8 391.1 1182.3 393.7 1187.6 395.3C1192.9 396.9 1197.9 397.6 1200.0 398.0L1270.0 430.0L1180.0 350.0L1000.0 295.0Z" fill="#3c3ccc"/>
<path d="M1116.0 347.0C1117.3 348.2 1119.7 351.4 1123.6 354.4C1127.5 357.4 1133.4 361.1 1139.6 365.0C1145.8 368.9 1154.5 374.0 1161.0 377.6C1167.5 381.2 1173.5 384.2 1178.7 386.4C1183.9 388.6 1189.8 390.2 1192.0 391.0" fill="none" stroke="#5a5af0" stroke-width="5" filter="url(#b1)"/>
</g>
<clipPath id="r7"><path d="M1116.0 347.0C1117.3 348.2 1119.7 351.4 1123.6 354.4C1127.5 357.4 1133.4 361.1 1139.6 365.0C1145.8 368.9 1154.5 374.0 1161.0 377.6C1167.5 381.2 1173.5 384.2 1178.7 386.4C1183.9 388.6 1189.8 390.2 1192.0 391.0L1270.0 430.0L1180.0 350.0L1000.0 295.0Z"/></clipPath>
<g clip-path="url(#r7)">
<path d="M1116.0 347.0C1117.3 348.2 1119.7 351.4 1123.6 354.4C1127.5 357.4 1133.4 361.1 1139.6 365.0C1145.8 368.9 1154.5 374.0 1161.0 377.6C1167.5 381.2 1173.5 384.2 1178.7 386.4C1183.9 388.6 1189.8 390.2 1192.0 391.0L1270.0 430.0L1180.0 350.0L1000.0 295.0Z" fill="#4a6ad0"/>
</g>
<clipPath id="r8"><path d="M1123.0 351.0C1124.0 351.9 1125.6 354.1 1128.9 356.2C1132.2 358.2 1138.3 360.6 1143.0 363.3C1147.7 366.0 1152.5 369.2 1157.3 372.2C1162.1 375.1 1167.5 378.7 1171.6 381.0C1175.7 383.3 1180.3 385.2 1182.0 386.0L1270.0 430.0L1180.0 350.0L1000.0 295.0Z"/></clipPath>
<g clip-path="url(#r8)">
<path d="M1123.0 351.0C1124.0 351.9 1125.6 354.1 1128.9 356.2C1132.2 358.2 1138.3 360.6 1143.0 363.3C1147.7 366.0 1152.5 369.2 1157.3 372.2C1162.1 375.1 1167.5 378.7 1171.6 381.0C1175.7 383.3 1180.3 385.2 1182.0 386.0L1270.0 430.0L1180.0 350.0L1000.0 295.0Z" fill="#60a4c8"/>
</g>
<clipPath id="ry"><path d="M882.0 348.0C881.8 346.4 880.6 341.9 880.6 338.5C880.6 335.1 880.8 331.3 882.0 327.5C883.2 323.7 884.8 319.3 887.6 315.8C890.4 312.3 894.5 309.0 899.0 306.6C903.5 304.2 908.2 302.4 914.5 301.3C920.8 300.2 929.7 299.6 937.0 299.9C944.3 300.2 951.1 301.4 958.2 302.9C965.3 304.4 973.3 307.0 979.4 309.0C985.5 311.0 990.8 313.2 995.0 314.8C999.2 316.4 999.5 315.9 1004.7 318.4C1009.9 320.9 1019.5 325.9 1026.0 329.7C1032.5 333.5 1038.5 337.5 1043.8 341.0C1049.1 344.5 1052.5 346.9 1057.8 350.9C1063.1 354.9 1070.9 360.0 1075.6 365.0C1080.3 370.0 1081.6 375.9 1086.0 381.0C1090.4 386.1 1095.7 390.5 1102.2 395.3C1108.8 400.1 1117.3 405.2 1125.3 409.6C1133.3 414.1 1141.7 418.1 1150.0 422.0C1158.3 425.9 1166.7 429.4 1175.0 432.7C1183.3 436.0 1192.9 439.7 1200.0 442.0C1207.1 444.3 1211.9 445.5 1217.8 446.7C1223.7 447.9 1229.9 448.6 1235.6 449.3C1241.3 450.0 1249.3 450.7 1252.0 451.0L1300.0 465.0L1500.0 640.0L1400.0 700.0L860.0 440.0L866.0 352.0Z"/></clipPath>
<g clip-path="url(#ry)">
<path d="M882.0 348.0C881.8 346.4 880.6 341.9 880.6 338.5C880.6 335.1 880.8 331.3 882.0 327.5C883.2 323.7 884.8 319.3 887.6 315.8C890.4 312.3 894.5 309.0 899.0 306.6C903.5 304.2 908.2 302.4 914.5 301.3C920.8 300.2 929.7 299.6 937.0 299.9C944.3 300.2 951.1 301.4 958.2 302.9C965.3 304.4 973.3 307.0 979.4 309.0C985.5 311.0 990.8 313.2 995.0 314.8C999.2 316.4 999.5 315.9 1004.7 318.4C1009.9 320.9 1019.5 325.9 1026.0 329.7C1032.5 333.5 1038.5 337.5 1043.8 341.0C1049.1 344.5 1052.5 346.9 1057.8 350.9C1063.1 354.9 1070.9 360.0 1075.6 365.0C1080.3 370.0 1081.6 375.9 1086.0 381.0C1090.4 386.1 1095.7 390.5 1102.2 395.3C1108.8 400.1 1117.3 405.2 1125.3 409.6C1133.3 414.1 1141.7 418.1 1150.0 422.0C1158.3 425.9 1166.7 429.4 1175.0 432.7C1183.3 436.0 1192.9 439.7 1200.0 442.0C1207.1 444.3 1211.9 445.5 1217.8 446.7C1223.7 447.9 1229.9 448.6 1235.6 449.3C1241.3 450.0 1249.3 450.7 1252.0 451.0L1300.0 465.0L1500.0 640.0L1400.0 700.0L860.0 440.0L866.0 352.0Z" fill="#ece42c"/>
<path d="M886.0 350.0C886.2 348.3 885.9 343.3 887.0 340.0C888.1 336.7 890.3 333.8 892.7 330.4C895.1 327.0 897.2 322.9 901.6 319.8C906.0 316.7 913.4 313.3 919.3 311.8C925.2 310.3 931.0 310.8 937.0 310.9C943.0 311.0 949.0 311.5 955.0 312.7C961.0 313.9 966.8 315.9 972.7 318.0C978.6 320.1 984.5 322.3 990.4 325.0C996.3 327.7 1002.1 330.7 1008.0 334.0C1013.9 337.3 1020.7 341.0 1026.0 344.7C1031.3 348.4 1035.3 352.5 1040.0 356.2C1044.7 359.9 1050.0 362.8 1054.2 366.9C1058.4 371.0 1062.2 375.7 1064.9 381.0C1067.6 386.3 1067.0 393.6 1070.2 398.9C1073.5 404.2 1077.6 408.3 1084.4 413.0C1091.2 417.7 1102.1 422.8 1111.0 427.3C1119.9 431.8 1128.9 436.0 1137.8 439.8C1146.7 443.6 1155.5 447.1 1164.4 450.4C1173.3 453.6 1182.1 456.1 1191.0 459.3C1199.9 462.5 1210.4 467.6 1217.8 469.8C1225.2 472.0 1229.7 471.8 1235.6 472.4C1241.5 473.0 1246.7 473.1 1253.3 473.3C1259.9 473.5 1271.4 473.3 1275.0 473.3" fill="none" stroke="#8e8a1c" stroke-width="9" filter="url(#b1)"/>
<path d="M882.0 348.0C881.8 346.4 880.6 341.9 880.6 338.5C880.6 335.1 880.8 331.3 882.0 327.5C883.2 323.7 884.8 319.3 887.6 315.8C890.4 312.3 894.5 309.0 899.0 306.6C903.5 304.2 908.2 302.4 914.5 301.3C920.8 300.2 929.7 299.6 937.0 299.9C944.3 300.2 951.1 301.4 958.2 302.9C965.3 304.4 973.3 307.0 979.4 309.0C985.5 311.0 990.8 313.2 995.0 314.8C999.2 316.4 999.5 315.9 1004.7 318.4C1009.9 320.9 1019.5 325.9 1026.0 329.7C1032.5 333.5 1038.5 337.5 1043.8 341.0C1049.1 344.5 1052.5 346.9 1057.8 350.9C1063.1 354.9 1070.9 360.0 1075.6 365.0C1080.3 370.0 1081.6 375.9 1086.0 381.0C1090.4 386.1 1095.7 390.5 1102.2 395.3C1108.8 400.1 1117.3 405.2 1125.3 409.6C1133.3 414.1 1141.7 418.1 1150.0 422.0C1158.3 425.9 1166.7 429.4 1175.0 432.7C1183.3 436.0 1192.9 439.7 1200.0 442.0C1207.1 444.3 1211.9 445.5 1217.8 446.7C1223.7 447.9 1229.9 448.6 1235.6 449.3C1241.3 450.0 1249.3 450.7 1252.0 451.0" fill="none" stroke="#ffff52" stroke-width="6" filter="url(#b1)"/>
<path d="M894.6 317.8C897.0 316.4 904.0 311.2 909.1 309.2C914.3 307.3 919.6 306.6 925.8 306.1C931.9 305.6 939.4 305.6 946.0 306.3C952.6 307.0 959.0 308.7 965.5 310.4C971.9 312.2 978.9 314.7 984.9 317.0C990.9 319.3 996.4 322.0 1001.5 324.4C1006.6 326.8 1010.1 328.5 1015.4 331.5C1020.6 334.6 1027.4 339.2 1033.0 342.9C1038.6 346.7 1044.3 350.1 1049.0 353.9C1053.7 357.8 1057.4 361.3 1061.3 365.9C1065.3 370.6 1068.9 376.8 1072.9 381.9C1076.9 387.1 1079.6 392.1 1085.2 397.0C1090.8 401.9 1098.9 406.7 1106.6 411.3C1114.3 415.9 1123.1 420.6 1131.5 424.7C1140.0 428.9 1148.6 432.6 1157.2 436.2C1165.8 439.8 1174.4 442.7 1183.0 446.0C1191.6 449.3 1201.6 453.6 1208.9 455.9C1216.2 458.2 1220.8 458.6 1226.7 459.5C1232.6 460.4 1238.3 460.9 1244.4 461.3C1250.6 461.7 1260.3 462.0 1263.5 462.1" fill="none" stroke="#ffff58" stroke-width="3.500" filter="url(#b1)" transform="translate(0 -1.500)"/>
</g>
<clipPath id="rg"><path d="M886.0 350.0C886.2 348.3 885.9 343.3 887.0 340.0C888.1 336.7 890.3 333.8 892.7 330.4C895.1 327.0 897.2 322.9 901.6 319.8C906.0 316.7 913.4 313.3 919.3 311.8C925.2 310.3 931.0 310.8 937.0 310.9C943.0 311.0 949.0 311.5 955.0 312.7C961.0 313.9 966.8 315.9 972.7 318.0C978.6 320.1 984.5 322.3 990.4 325.0C996.3 327.7 1002.1 330.7 1008.0 334.0C1013.9 337.3 1020.7 341.0 1026.0 344.7C1031.3 348.4 1035.3 352.5 1040.0 356.2C1044.7 359.9 1050.0 362.8 1054.2 366.9C1058.4 371.0 1062.2 375.7 1064.9 381.0C1067.6 386.3 1067.0 393.6 1070.2 398.9C1073.5 404.2 1077.6 408.3 1084.4 413.0C1091.2 417.7 1102.1 422.8 1111.0 427.3C1119.9 431.8 1128.9 436.0 1137.8 439.8C1146.7 443.6 1155.5 447.1 1164.4 450.4C1173.3 453.6 1182.1 456.1 1191.0 459.3C1199.9 462.5 1210.4 467.6 1217.8 469.8C1225.2 472.0 1229.7 471.8 1235.6 472.4C1241.5 473.0 1246.7 473.1 1253.3 473.3C1259.9 473.5 1271.4 473.3 1275.0 473.3L1300.0 465.0L1500.0 640.0L1400.0 700.0L860.0 440.0L866.0 352.0Z"/></clipPath>
<g clip-path="url(#rg)">
<path d="M886.0 350.0C886.2 348.3 885.9 343.3 887.0 340.0C888.1 336.7 890.3 333.8 892.7 330.4C895.1 327.0 897.2 322.9 901.6 319.8C906.0 316.7 913.4 313.3 919.3 311.8C925.2 310.3 931.0 310.8 937.0 310.9C943.0 311.0 949.0 311.5 955.0 312.7C961.0 313.9 966.8 315.9 972.7 318.0C978.6 320.1 984.5 322.3 990.4 325.0C996.3 327.7 1002.1 330.7 1008.0 334.0C1013.9 337.3 1020.7 341.0 1026.0 344.7C1031.3 348.4 1035.3 352.5 1040.0 356.2C1044.7 359.9 1050.0 362.8 1054.2 366.9C1058.4 371.0 1062.2 375.7 1064.9 381.0C1067.6 386.3 1067.0 393.6 1070.2 398.9C1073.5 404.2 1077.6 408.3 1084.4 413.0C1091.2 417.7 1102.1 422.8 1111.0 427.3C1119.9 431.8 1128.9 436.0 1137.8 439.8C1146.7 443.6 1155.5 447.1 1164.4 450.4C1173.3 453.6 1182.1 456.1 1191.0 459.3C1199.9 462.5 1210.4 467.6 1217.8 469.8C1225.2 472.0 1229.7 471.8 1235.6 472.4C1241.5 473.0 1246.7 473.1 1253.3 473.3C1259.9 473.5 1271.4 473.3 1275.0 473.3L1300.0 465.0L1500.0 640.0L1400.0 700.0L860.0 440.0L866.0 352.0Z" fill="#1fd02e"/>
<path d="M886.0 350.0C886.2 348.3 885.9 343.3 887.0 340.0C888.1 336.7 890.3 333.8 892.7 330.4C895.1 327.0 897.2 322.9 901.6 319.8C906.0 316.7 913.4 313.3 919.3 311.8C925.2 310.3 931.0 310.8 937.0 310.9C943.0 311.0 949.0 311.5 955.0 312.7C961.0 313.9 966.8 315.9 972.7 318.0C978.6 320.1 984.5 322.3 990.4 325.0C996.3 327.7 1002.1 330.7 1008.0 334.0C1013.9 337.3 1020.7 341.0 1026.0 344.7C1031.3 348.4 1035.3 352.5 1040.0 356.2C1044.7 359.9 1050.0 362.8 1054.2 366.9C1058.4 371.0 1062.2 375.7 1064.9 381.0C1067.6 386.3 1067.0 393.6 1070.2 398.9C1073.5 404.2 1077.6 408.3 1084.4 413.0C1091.2 417.7 1102.1 422.8 1111.0 427.3C1119.9 431.8 1128.9 436.0 1137.8 439.8C1146.7 443.6 1155.5 447.1 1164.4 450.4C1173.3 453.6 1182.1 456.1 1191.0 459.3C1199.9 462.5 1210.4 467.6 1217.8 469.8C1225.2 472.0 1229.7 471.8 1235.6 472.4C1241.5 473.0 1246.7 473.1 1253.3 473.3C1259.9 473.5 1271.4 473.3 1275.0 473.3" fill="none" stroke="#08ff1c" stroke-width="15" filter="url(#b1)"/>
</g>
<clipPath id="rgd"><path d="M883.0 356.0C883.0 355.6 881.9 355.5 882.9 353.6C883.9 351.7 885.9 347.7 889.0 344.7C892.1 341.7 896.6 338.0 901.6 335.8C906.6 333.6 913.4 332.1 919.3 331.3C925.2 330.6 931.0 330.9 937.0 331.3C943.0 331.8 949.0 332.7 955.0 334.0C961.0 335.3 966.8 337.1 972.7 339.3C978.6 341.5 984.5 344.5 990.4 347.3C996.3 350.1 1002.1 353.1 1008.0 356.2C1013.9 359.3 1020.0 362.6 1026.0 366.0C1032.0 369.4 1037.1 372.5 1043.8 376.7C1050.5 380.9 1059.0 386.3 1066.0 391.0C1073.0 395.7 1079.1 400.2 1086.0 405.0C1092.9 409.8 1098.6 413.8 1107.6 420.0C1116.6 426.2 1128.8 435.0 1140.0 442.0C1151.2 449.0 1164.2 456.5 1175.0 461.8C1185.8 467.1 1194.2 470.0 1205.0 474.0C1215.8 478.0 1227.8 481.9 1240.0 485.8C1252.2 489.8 1268.0 494.8 1278.0 497.7C1288.0 500.6 1296.3 502.1 1300.0 503.0L1300.0 465.0L1500.0 640.0L1400.0 700.0L860.0 440.0L866.0 352.0Z"/></clipPath>
<g clip-path="url(#rgd)">
<path d="M883.0 356.0C883.0 355.6 881.9 355.5 882.9 353.6C883.9 351.7 885.9 347.7 889.0 344.7C892.1 341.7 896.6 338.0 901.6 335.8C906.6 333.6 913.4 332.1 919.3 331.3C925.2 330.6 931.0 330.9 937.0 331.3C943.0 331.8 949.0 332.7 955.0 334.0C961.0 335.3 966.8 337.1 972.7 339.3C978.6 341.5 984.5 344.5 990.4 347.3C996.3 350.1 1002.1 353.1 1008.0 356.2C1013.9 359.3 1020.0 362.6 1026.0 366.0C1032.0 369.4 1037.1 372.5 1043.8 376.7C1050.5 380.9 1059.0 386.3 1066.0 391.0C1073.0 395.7 1079.1 400.2 1086.0 405.0C1092.9 409.8 1098.6 413.8 1107.6 420.0C1116.6 426.2 1128.8 435.0 1140.0 442.0C1151.2 449.0 1164.2 456.5 1175.0 461.8C1185.8 467.1 1194.2 470.0 1205.0 474.0C1215.8 478.0 1227.8 481.9 1240.0 485.8C1252.2 489.8 1268.0 494.8 1278.0 497.7C1288.0 500.6 1296.3 502.1 1300.0 503.0L1300.0 465.0L1500.0 640.0L1400.0 700.0L860.0 440.0L866.0 352.0Z" fill="#2c8c4a"/>
<path d="M883.0 356.0C883.0 355.6 881.9 355.5 882.9 353.6C883.9 351.7 885.9 347.7 889.0 344.7C892.1 341.7 896.6 338.0 901.6 335.8C906.6 333.6 913.4 332.1 919.3 331.3C925.2 330.6 931.0 330.9 937.0 331.3C943.0 331.8 949.0 332.7 955.0 334.0C961.0 335.3 966.8 337.1 972.7 339.3C978.6 341.5 984.5 344.5 990.4 347.3C996.3 350.1 1002.1 353.1 1008.0 356.2C1013.9 359.3 1020.0 362.6 1026.0 366.0C1032.0 369.4 1037.1 372.5 1043.8 376.7C1050.5 380.9 1059.0 386.3 1066.0 391.0C1073.0 395.7 1079.1 400.2 1086.0 405.0C1092.9 409.8 1098.6 413.8 1107.6 420.0C1116.6 426.2 1128.8 435.0 1140.0 442.0C1151.2 449.0 1164.2 456.5 1175.0 461.8C1185.8 467.1 1194.2 470.0 1205.0 474.0C1215.8 478.0 1227.8 481.9 1240.0 485.8C1252.2 489.8 1268.0 494.8 1278.0 497.7C1288.0 500.6 1296.3 502.1 1300.0 503.0" fill="none" stroke="#2a6e44" stroke-width="6" filter="url(#b1)"/>
<path d="M1075.0 420.0C1080.0 416.7 1097.5 432.8 1110.0 440.0C1122.5 447.2 1135.0 455.5 1150.0 463.0C1165.0 470.5 1181.7 478.0 1200.0 485.0C1218.3 492.0 1251.7 497.5 1260.0 505.0C1268.3 512.5 1260.0 524.2 1250.0 530.0C1240.0 535.8 1216.7 540.0 1200.0 540.0C1183.3 540.0 1165.0 536.7 1150.0 530.0C1135.0 523.3 1121.7 511.7 1110.0 500.0C1098.3 488.3 1085.8 473.3 1080.0 460.0C1074.2 446.7 1070.0 423.3 1075.0 420.0Z" fill="#27b43a" filter="url(#b3)"/><path d="M1150.0 500.0C1160.0 500.0 1183.3 511.2 1200.0 512.0C1216.7 512.8 1237.5 507.0 1250.0 505.0C1262.5 503.0 1273.0 497.5 1275.0 500.0C1277.0 502.5 1269.5 513.7 1262.0 520.0C1254.5 526.3 1243.7 534.5 1230.0 538.0C1216.3 541.5 1193.3 542.3 1180.0 541.0C1166.7 539.7 1156.7 534.8 1150.0 530.0C1143.3 525.2 1140.0 517.0 1140.0 512.0C1140.0 507.0 1140.0 500.0 1150.0 500.0Z" fill="#2e7a48" filter="url(#b3)" opacity=".9"/><path d="M1160.0 520.0C1162.5 517.7 1184.2 522.8 1195.0 522.0C1205.8 521.2 1221.7 513.7 1225.0 515.0C1228.3 516.3 1222.5 526.5 1215.0 530.0C1207.5 533.5 1189.2 537.7 1180.0 536.0C1170.8 534.3 1157.5 522.3 1160.0 520.0Z" fill="#2ba03e" filter="url(#b3)" opacity=".9"/>
</g>
<path d="M904.0 353.6C903.7 349.6 906.4 345.8 910.4 343.0C914.4 340.2 922.3 337.9 928.2 336.7C934.1 335.5 940.1 335.4 946.0 335.8C951.9 336.2 957.9 337.5 963.8 339.3C969.7 341.1 975.7 343.7 981.6 346.4C987.5 349.1 993.4 352.0 999.3 355.3C1005.2 358.6 1011.0 361.9 1017.0 366.0C1023.0 370.1 1030.5 375.3 1035.0 380.0C1039.5 384.7 1042.6 389.9 1043.8 394.4C1045.0 398.9 1043.2 402.9 1042.0 407.0C1040.8 411.1 1038.5 415.8 1036.7 419.3C1034.9 422.8 1031.8 424.6 1031.3 428.0C1030.8 431.4 1031.7 436.0 1034.0 440.0C1036.3 444.0 1045.7 450.0 1045.0 452.0C1044.3 454.0 1034.7 453.7 1030.0 452.0C1025.3 450.3 1022.1 445.8 1017.0 442.0C1011.9 438.2 1005.2 433.4 999.3 429.5C993.4 425.6 987.2 422.2 981.6 418.5C976.0 414.8 971.5 411.6 965.6 407.5C959.7 403.4 952.3 398.1 946.0 393.7C939.7 389.3 933.7 385.4 928.0 381.0C922.3 376.6 916.0 371.6 912.0 367.0C908.0 362.4 904.3 357.6 904.0 353.6Z" fill="#86c2e8"/>
<path d="M914.0 357.0C914.9 353.4 919.4 349.1 924.7 346.4C930.0 343.7 938.0 341.0 946.0 341.0C954.0 341.0 963.8 343.1 972.7 346.4C981.6 349.7 990.4 355.4 999.3 360.7C1008.2 366.0 1019.8 373.1 1026.0 378.4C1032.2 383.7 1035.5 387.4 1036.7 392.7C1037.9 398.0 1036.3 405.7 1033.0 410.4C1029.7 415.1 1024.1 419.8 1017.0 421.0C1009.9 422.2 999.3 420.8 990.4 417.5C981.5 414.2 972.7 407.4 963.8 401.5C954.9 395.6 944.4 387.6 937.0 382.0C929.6 376.4 923.1 372.0 919.3 367.8C915.5 363.6 913.1 360.6 914.0 357.0Z" fill="#5a98bc"/>
<ellipse cx="964" cy="374" rx="40" ry="12" transform="rotate(33 964 374)" fill="#4a6cba" filter="url(#b6)"/>
<path d="M1022.0 440.0C1024.5 439.9 1034.0 444.1 1040.0 446.7C1046.0 449.3 1050.4 451.8 1057.8 455.6C1065.2 459.5 1075.5 465.7 1084.4 469.8C1093.3 473.9 1103.0 477.1 1111.0 480.4C1119.0 483.6 1125.9 486.3 1132.4 489.3C1138.9 492.3 1146.4 495.5 1150.0 498.2C1153.6 500.9 1155.0 502.9 1153.8 505.3C1152.6 507.7 1146.0 509.7 1143.0 512.4C1140.0 515.1 1138.0 518.8 1136.0 521.3C1134.0 523.8 1133.7 526.1 1130.7 527.6C1127.7 529.1 1123.1 532.1 1118.0 530.0C1112.9 527.9 1107.2 521.7 1100.0 515.0C1092.8 508.3 1083.3 498.2 1075.0 490.0C1066.7 481.8 1058.3 473.2 1050.0 466.0C1041.7 458.8 1029.7 451.3 1025.0 447.0C1020.3 442.7 1019.5 440.1 1022.0 440.0Z" fill="#86c0e6"/>
<path d="M1057.8 468.0C1061.4 468.0 1075.5 473.4 1084.4 477.0C1093.3 480.6 1104.5 486.1 1111.0 489.3C1117.5 492.5 1123.6 494.0 1123.6 496.4C1123.6 498.8 1116.0 503.3 1111.0 503.6C1106.0 503.9 1099.2 500.9 1093.3 498.2C1087.4 495.5 1080.6 491.1 1075.6 487.6C1070.5 484.1 1066.0 480.3 1063.0 477.0C1060.0 473.7 1054.2 468.0 1057.8 468.0Z" fill="#5e96ba" filter="url(#b1)"/>
<path d="M1030.0 440.0C1032.0 440.0 1040.0 447.0 1045.0 452.0C1050.0 457.0 1059.2 467.3 1060.0 470.0C1060.8 472.7 1054.5 471.0 1050.0 468.0C1045.5 465.0 1036.3 456.7 1033.0 452.0C1029.7 447.3 1028.0 440.0 1030.0 440.0Z" fill="#6ea8cc" filter="url(#b1)"/>
<path d="M1120.0 541.0C1122.3 541.9 1126.6 545.5 1134.0 546.2C1141.4 546.9 1153.4 545.3 1164.4 545.3C1175.4 545.3 1191.1 546.4 1200.0 546.2C1208.9 546.1 1211.9 545.6 1217.8 544.4C1223.7 543.2 1229.7 541.7 1235.6 539.0C1241.5 536.3 1248.0 532.2 1253.3 528.4C1258.6 524.6 1263.1 519.6 1267.6 516.0C1272.0 512.4 1274.7 509.6 1280.0 507.0C1285.3 504.4 1294.3 502.0 1299.6 500.5C1304.9 499.0 1309.9 498.4 1312.0 498.0L1400.0 540.0L1500.0 620.0L1450.0 700.0L1100.0 600.0Z" fill="#8cc6ea"/>
<rect x="860" y="280" width="640" height="400" fill="url(#meshH)"/>
<clipPath id="rf"><path d="M1120.0 548.0C1122.3 548.7 1126.6 551.5 1134.0 552.4C1141.4 553.3 1153.4 552.9 1164.4 553.3C1175.4 553.7 1190.5 554.9 1200.0 555.0C1209.5 555.1 1215.4 554.6 1221.3 554.2C1227.2 553.8 1230.3 554.3 1235.6 552.4C1240.9 550.5 1247.4 546.7 1253.3 542.7C1259.2 538.7 1266.0 532.5 1271.0 528.4C1276.0 524.2 1278.8 521.0 1283.6 517.8C1288.4 514.6 1294.9 511.3 1299.6 509.0C1304.3 506.7 1309.9 504.8 1312.0 504.0L1400.0 540.0L1500.0 620.0L1450.0 700.0L1100.0 600.0Z"/></clipPath>
<g clip-path="url(#rf)"><path d="M1120.0 548.0C1122.3 548.7 1126.6 551.5 1134.0 552.4C1141.4 553.3 1153.4 552.9 1164.4 553.3C1175.4 553.7 1190.5 554.9 1200.0 555.0C1209.5 555.1 1215.4 554.6 1221.3 554.2C1227.2 553.8 1230.3 554.3 1235.6 552.4C1240.9 550.5 1247.4 546.7 1253.3 542.7C1259.2 538.7 1266.0 532.5 1271.0 528.4C1276.0 524.2 1278.8 521.0 1283.6 517.8C1288.4 514.6 1294.9 511.3 1299.6 509.0C1304.3 506.7 1309.9 504.8 1312.0 504.0L1400.0 540.0L1500.0 620.0L1450.0 700.0L1100.0 600.0Z" fill="#4f7e9e"/>
<ellipse cx="1345" cy="560" rx="52" ry="15" transform="rotate(31 1345 560)" fill="#4e5eb0" filter="url(#b6)"/>
<ellipse cx="1250" cy="582" rx="46" ry="12" transform="rotate(24 1250 582)" fill="#4e5eb0" filter="url(#b6)"/>
<ellipse cx="1300" cy="545" rx="30" ry="10" transform="rotate(31 1300 545)" fill="#4e62b0" filter="url(#b6)"/>
<ellipse cx="1420" cy="625" rx="40" ry="22" transform="rotate(30 1420 625)" fill="#52809c" filter="url(#b6)" opacity=".8"/>
</g>
<rect x="860" y="280" width="640" height="400" fill="url(#mesh)" clip-path="url(#rf)"/>
</g>
<g fill="none" stroke="#2424dc" stroke-width="1">
<path d="M877.6 339.3C877.9 337.2 878.0 331.0 879.3 326.9C880.6 322.8 882.5 318.1 885.6 314.4C888.7 310.7 893.3 307.2 898.0 304.7C902.7 302.2 907.5 300.4 914.0 299.3C920.5 298.2 929.6 297.7 937.0 298.0C944.4 298.3 951.3 299.4 958.4 301.0C965.5 302.6 972.7 304.9 979.8 307.3C986.9 309.7 993.9 312.8 1001.0 315.3C1008.1 317.8 1015.3 320.2 1022.4 322.4C1029.5 324.6 1036.4 326.5 1043.8 328.7C1051.2 330.9 1058.5 333.3 1066.7 335.8C1075.0 338.3 1084.4 341.0 1093.3 343.8C1102.2 346.6 1111.1 349.4 1120.0 352.7C1128.9 355.9 1138.7 359.4 1146.7 363.3C1154.7 367.2 1161.5 371.7 1168.0 375.8C1174.5 379.9 1180.5 384.1 1185.8 388.2C1191.1 392.3 1195.3 396.2 1200.0 400.7C1204.7 405.1 1209.5 410.2 1214.2 414.9C1218.9 419.6 1224.8 424.9 1228.4 429.0C1232.0 433.1 1231.4 434.6 1235.6 439.6C1239.8 444.6 1247.4 453.1 1253.3 459.0C1259.2 464.9 1265.0 469.9 1271.0 475.0C1277.0 480.1 1283.0 484.7 1289.0 489.3C1295.0 493.9 1300.8 498.9 1306.7 502.7C1312.6 506.5 1318.5 509.1 1324.4 512.4C1330.3 515.6 1336.3 518.8 1342.2 522.2C1348.1 525.6 1354.1 529.3 1360.0 533.0C1365.9 536.7 1371.1 540.0 1377.8 544.4C1384.5 548.8 1393.8 555.3 1400.0 559.6C1406.2 563.9 1408.3 564.9 1415.0 570.0C1421.7 575.1 1432.9 584.2 1440.0 590.0C1447.1 595.8 1452.9 600.4 1457.5 605.0C1462.1 609.6 1465.4 614.2 1467.5 617.5C1469.6 620.8 1469.6 623.8 1470.0 625.0" stroke-width=".8"/>
<path d="M879.0 335.8C879.8 337.6 881.5 342.9 883.8 346.4C886.1 349.9 888.3 352.9 892.7 357.0C897.1 361.1 904.5 366.7 910.4 371.3C916.3 375.9 922.3 380.6 928.2 384.7C934.1 388.8 940.1 392.2 946.0 396.2C951.9 400.2 958.5 404.8 963.8 408.7C969.1 412.6 973.1 415.7 978.0 419.5C982.9 423.3 987.8 427.4 993.3 431.5C998.8 435.6 1003.9 439.3 1011.0 444.0C1018.1 448.7 1030.0 455.3 1036.0 459.5C1042.0 463.7 1042.0 465.0 1046.7 469.3C1051.4 473.6 1058.5 480.0 1064.4 485.3C1070.3 490.6 1076.3 496.0 1082.2 501.3C1088.1 506.6 1094.1 511.7 1100.0 517.3C1105.9 522.9 1113.1 530.2 1117.8 535.0C1122.5 539.8 1126.3 544.0 1128.0 545.8" stroke="#1c1ccc" opacity=".9"/>
<path d="M883.0 356.0C883.0 355.6 881.9 355.5 882.9 353.6C883.9 351.7 885.9 347.7 889.0 344.7C892.1 341.7 896.6 338.0 901.6 335.8C906.6 333.6 913.4 332.1 919.3 331.3C925.2 330.6 931.0 330.9 937.0 331.3C943.0 331.8 949.0 332.7 955.0 334.0C961.0 335.3 966.8 337.1 972.7 339.3C978.6 341.5 984.5 344.5 990.4 347.3C996.3 350.1 1002.1 353.1 1008.0 356.2C1013.9 359.3 1020.0 362.6 1026.0 366.0C1032.0 369.4 1037.1 372.5 1043.8 376.7C1050.5 380.9 1059.0 386.3 1066.0 391.0C1073.0 395.7 1079.1 400.2 1086.0 405.0C1092.9 409.8 1098.6 413.8 1107.6 420.0C1116.6 426.2 1128.8 435.0 1140.0 442.0C1151.2 449.0 1164.2 456.5 1175.0 461.8C1185.8 467.1 1194.2 470.0 1205.0 474.0C1215.8 478.0 1227.8 481.9 1240.0 485.8C1252.2 489.8 1268.0 494.8 1278.0 497.7C1288.0 500.6 1294.9 501.5 1300.0 503.0C1305.1 504.5 1308.5 505.6 1308.4 506.6C1308.3 507.6 1303.7 507.1 1299.6 509.0C1295.5 510.9 1288.4 514.6 1283.6 517.8C1278.8 521.0 1276.0 524.2 1271.0 528.4C1266.0 532.5 1259.2 538.7 1253.3 542.7C1247.4 546.7 1240.9 550.5 1235.6 552.4C1230.3 554.3 1227.2 553.8 1221.3 554.2C1215.4 554.6 1209.5 555.1 1200.0 555.0C1190.5 554.9 1175.4 553.7 1164.4 553.3C1153.4 552.9 1139.1 552.5 1134.0 552.4"/>
<path d="M1068.4 542.3C1075.5 541.8 1098.0 540.1 1111.0 539.0C1124.0 537.9 1134.9 536.8 1146.7 535.6C1158.5 534.4 1171.6 533.5 1182.0 532.0C1192.4 530.5 1201.5 528.5 1209.0 526.7C1216.5 524.9 1219.4 523.4 1226.7 521.0C1234.0 518.6 1244.5 516.3 1253.0 512.4C1261.5 508.5 1269.3 502.3 1278.0 497.7C1286.7 493.1 1300.5 487.1 1305.0 485.0"/>
<path d="M1232 444L1006 507.500L1076.400 556L1125 552"/>
<path d="M1232 444L1331.600 497.700L1308.400 506.600"/>
<path d="M1200 453.500L1232 444L1247 452"/>
</g>
<path d="M1036.0 458.7C1037.8 460.5 1042.0 464.9 1046.7 469.3C1051.4 473.7 1058.5 480.0 1064.4 485.3C1070.3 490.6 1076.3 496.0 1082.2 501.3C1088.1 506.6 1094.1 511.7 1100.0 517.3C1105.9 522.9 1113.1 530.2 1117.8 535.0C1122.5 539.8 1126.3 544.0 1128.0 545.8" fill="none" stroke="#e02020" stroke-width="1"/>
<g fill="none" stroke="#e040d8" stroke-width="1">
<path d="M1054.2 544.4C1060.2 542.8 1077.5 538.1 1090.0 535.0C1102.5 531.9 1122.5 527.3 1129.0 525.8" stroke="#f090e0"/>
<path d="M1129.0 525.8C1137.6 523.5 1168.6 515.1 1180.4 512.0C1192.2 508.9 1187.9 510.0 1200.0 507.0C1212.1 504.0 1238.8 497.3 1253.0 493.8C1267.2 490.3 1279.7 487.1 1285.0 485.8"/>
<path d="M1285 485.800L1307.600 479.600" stroke="#f090e0"/>
<path d="M1127.0 470.7C1135.9 477.6 1162.5 498.3 1180.4 512.0C1198.4 525.7 1225.7 546.2 1234.7 553.0"/>
</g>
<g fill="#f040e0"><rect x="1052.700" y="543" width="3" height="3"/><rect x="1306" y="478" width="3.200" height="3.200"/><rect x="1125.500" y="469.200" width="3" height="3"/><rect x="1179" y="510.500" width="3" height="3"/><rect x="1233.200" y="551.500" width="3" height="3"/></g>
</g>
</svg>
<div id="vdiv"></div>
<div id="hdr">
  <div id="logo">voxel<b>care</b></div>
  <div id="logosub">ONLINE CAD/CAM SYSTEMS</div>
  <div class="tab" style="left:692px;width:48px">Patient</div>
  <div class="tab" style="left:740px;width:50px">Product</div>
  <div class="tab act" style="left:790px;width:61px">Treatment</div>
  <div class="tab dim" style="left:851px;width:57px">Overview</div>
  <div class="hsep" style="left:1384px"></div>
  <div class="hsep" style="left:1427px"></div>
  <div class="hsep" style="left:1470px"></div>
  <div class="hsep" style="left:1514px"></div>
  <div class="hsep" style="left:1557px"></div>
  <!-- grid/apps -->
  <svg class="hic" style="left:1385px" width="42" height="43" viewBox="0 0 42 43"><g fill="#fff">
    <rect x="15.8" y="17" width="2.8" height="2.8"/><rect x="19.9" y="17" width="2.8" height="2.8"/><rect x="24" y="17" width="2.8" height="2.8"/>
    <rect x="15.8" y="21.1" width="2.8" height="2.8"/><rect x="19.9" y="21.1" width="2.8" height="2.8"/><rect x="24" y="21.1" width="2.8" height="2.8"/>
    <rect x="15.8" y="25.2" width="2.8" height="2.8"/><rect x="19.9" y="25.2" width="2.8" height="2.8"/><rect x="24" y="25.2" width="2.8" height="2.8"/>
  </g></svg>
  <!-- info -->
  <svg class="hic" style="left:1428px" width="42" height="43" viewBox="0 0 42 43"><circle cx="21.2" cy="22.5" r="5.1" fill="none" stroke="#fff" stroke-width="1.1"/><rect x="20.6" y="21.7" width="1.2" height="3.6" fill="#fff"/><rect x="20.6" y="19.6" width="1.2" height="1.2" fill="#fff"/></svg>
  <!-- check box -->
  <svg class="hic" style="left:1471px" width="43" height="43" viewBox="0 0 43 43"><path d="M26.3 22.5v4.3a.8.8 0 0 1-.8.8h-8.3a.8.8 0 0 1-.8-.8v-8.3a.8.8 0 0 1 .8-.8h7.6" fill="none" stroke="#fff" stroke-width="1.3"/><path d="M18.6 22.3l2.3 2.3 5.6-5.8" fill="none" stroke="#fff" stroke-width="1.4"/></svg>
  <!-- globe -->
  <svg class="hic" style="left:1515px" width="42" height="43" viewBox="0 0 42 43"><circle cx="16.2" cy="22.5" r="5.9" fill="#fff"/><path d="M14.3 18.3l2.1.9.2 1.9-1.6 1-1.4 1.6 1.3 1.2 1.9.5.3 2.2-1.7.3-2.6-2.2-.9-3 .7-2.7zM17.5 17.9l2.4 1.1 1 1.6-1.4.3-1.1 1.5 1.6 1.1 1.2-.1-.7 2.3-1.7 1-.6-1.9-1.5-1.2.6-2.3z" fill="#333"/><path d="M26.7 21.4h4.6l-2.3 2.3z" fill="#fff"/></svg>
  <!-- logout -->
  <svg class="hic" style="left:1558px" width="42" height="43" viewBox="0 0 42 43"><path d="M21.5 17.6h-5.6a.9.9 0 0 0-.9.9v8.100a.9.900 0 0 0 .9.900h5.600" fill="none" stroke="#fff" stroke-width="1.500"/><path d="M19.300 21.500h4.200v-2.400l3.900 3.400-3.900 3.400v-2.400h-4.200z" fill="#fff"/></svg>
</div>
<!-- top toolbar row 1 -->
<div class="tb" style="left:544px;top:44px"><svg width="40" height="40" viewBox="0 0 40 40">
  <path d="M25.600 25.600a6.700 6.700 0 1 1 1.200-5.600" fill="none" stroke="#2b2b2b" stroke-width="1.400"/>
  <path d="M23.800 20.500h5l-2.500 3.500z" fill="#2b2b2b"/>
  <rect x="16.900" y="20.300" width="6" height="4.400" rx=".5" fill="#2b2b2b"/>
  <path d="M18.200 20.500v-1.500a1.700 1.700 0 0 1 3.400 0v1.500" fill="none" stroke="#2b2b2b" stroke-width="1.100"/>
</svg></div>
<div class="tb" style="left:586.9px;top:44px"><svg width="40" height="40" viewBox="0 0 40 40">
  <path d="M12.200 14.800h3.200l.9.900h4.800v5.600h-8.900z" fill="#2d2d2d"/>
  <path d="M18.700 21.200v4.200h4.500" fill="none" stroke="#ddd" stroke-width="1"/>
  <rect x="23.200" y="20.200" width="5.700" height="8.600" rx=".6" fill="#8a8a8a"/>
  <rect x="24.100" y="21.300" width="3.900" height="2" fill="#d9d9d9"/>
</svg></div>
<div class="tb" style="left:629.8px;top:44px"><svg width="40" height="40" viewBox="0 0 40 40">
  <defs><clipPath id="ci3"><path d="M7.300 27.100c-.6-1.800 3-4.200 6.600-5.800 2.200-1 3.500-3.600 5.700-5.500 3-2.500 9.300-3.900 12.400-2.600 1.800.8.900 2.700-1.800 4.600-3.300 2.300-5.400 4.300-8 6.200-3.300 2.500-13.900 6-14.900 3.100z"/></clipPath><filter id="fi3"><feGaussianBlur stdDeviation=".35"/></filter></defs>
  <g clip-path="url(#ci3)" filter="url(#fi3)">
    <rect width="40" height="40" fill="#4a5ec8"/>
    <path d="M13.500 21.400c2.400-1 3.700-3.500 5.900-5.400 3-2.500 9.300-3.900 12.400-2.600 1.800.8.900 2.700-1.800 4.600-3.300 2.300-5 4-7.500 5.800-1.400 1-3 .5-4.600-.2-1.300-.6-3-1.600-4.400-2.200z" fill="#35b832"/>
    <path d="M14 21.500c2.300-1.200 3.500-3.700 5.700-5.600 2.600-2.200 6.600-3.400 9.800-3.300" fill="none" stroke="#d8d828" stroke-width="6"/>
    <path d="M14 21.500c2.300-1.200 3.500-3.700 5.700-5.600 2.400-2.100 5.400-3.100 8-3.200" fill="none" stroke="#e8452e" stroke-width="4.400"/>
    <path d="M14 21.500c2.300-1.200 3.500-3.700 5.700-5.600 2.200-1.900 4.200-2.700 6.400-3" fill="none" stroke="#c032b4" stroke-width="3"/>
    <path d="M14 21.500c2.300-1.200 3.500-3.700 5.700-5.600 1.800-1.600 3.400-2.400 5-2.800" fill="none" stroke="#5646d8" stroke-width="1.600"/>
    <path d="M8.100 26.900c-.3-1.500 2.800-3.500 6-4.800 1.700-.7 5.700.2 7.400 1.200.8.500-.3 1.500-1.300 2-3.700 1.900-11.600 4-12.100 1.600z" fill="#55809f"/>
    <ellipse cx="28.200" cy="16.900" rx="3.200" ry="1.400" transform="rotate(-24 28.200 16.900)" fill="#5a8ab4"/>
    <path d="M22 20.500c1.500-1.500 4-3 6.500-3.500" fill="none" stroke="#5c9a30" stroke-width="1.200" opacity=".7"/>
  </g>
</svg></div>
<div class="tb" style="left:672.7px;top:44px"><svg width="40" height="40" viewBox="0 0 40 40">
  <defs><linearGradient id="tan1" x1="0" y1="1" x2="1" y2="0"><stop offset="0" stop-color="#9c7d4a"/><stop offset=".5" stop-color="#d9a860"/><stop offset="1" stop-color="#f0b868"/></linearGradient></defs>
  <path d="M6.900 26.900c-.6-1.800 3-4.200 6.600-5.800 2.200-1 3.500-3.600 5.700-5.500 3-2.500 9.300-3.900 12.400-2.600 1.800.8.900 2.700-1.800 4.600-3.300 2.300-5.400 4.300-8 6.200-3.300 2.500-13.900 6-14.900 3.100z" fill="url(#tan1)"/>
</svg></div>
<div class="tb blue" style="left:715.6px;top:44px"><svg width="40" height="40" viewBox="0 0 40 40">
  <path d="M7.300 26.900c-.6-1.800 3-4.200 6.600-5.800 2.200-1 3.500-3.600 5.700-5.500 3-2.500 9.300-3.900 12-2.600 1.800.8.900 2.700-1.800 4.600-3.300 2.300-5 4.300-7.600 6.200-3.300 2.500-13.900 6-14.900 3.100z" fill="none" stroke="#14648a" stroke-width=".9"/>
  <path d="M8.300 26.300c2.500-2.600 6.300-3.300 9.500-5.600 3.300-2.300 6.200-6 13.400-6.800" fill="none" stroke="#14648a" stroke-width=".8"/>
</svg></div>
<div class="tb" style="left:758.5px;top:44px"><svg width="40" height="40" viewBox="0 0 40 40">
  <path d="M15.200 19.600c0-4.300 2.300-7.300 5.700-7.400 3.400 0 5.900 3.100 6.100 7.200" fill="none" stroke="#3a3a3a" stroke-width="1.400"/>
  <path d="M17.300 13.800c1.400-.3 2 1.600 1.800 4-.2 2.600-.6 4.600-.5 6.800.1 1.800-.6 3.100-1.500 3-1-.1-1.400-1.500-1.400-3.500 0-1.800-.9-3.200-.9-5 0-2.300.8-5 2.500-5.300z" fill="#444"/>
  <path d="M24.700 13.800c-1.400-.3-2 1.600-1.800 4 .2 2.600.6 4.600.5 6.800-.1 1.800.6 3.100 1.500 3 1-.1 1.400-1.500 1.400-3.500 0-1.800.9-3.200.9-5 0-2.300-.8-5-2.500-5.300z" fill="#9a9a9a"/>
  <path d="M24.700 13.800c-1.400-.3-2 1.600-1.800 4l.3 2.600 3.800-.4c.1-.4.200-.6.200-.9 0-2.300-.8-5-2.500-5.300z" fill="#555"/>
</svg></div>
<div class="tb" style="left:801.4px;top:44px"><svg width="40" height="40" viewBox="0 0 40 40">
  <rect x="14" y="16.900" width="12.600" height="6.500" rx="1" fill="none" stroke="#2b2b2b" stroke-width="1.200"/>
  <path d="M16.500 17v2.300M18.900 17v1.700M21.200 17v2.300M23.600 17v1.700" stroke="#2b2b2b" stroke-width="1"/>
</svg></div>
<div class="tb" style="left:844.3px;top:44px"><svg width="40" height="40" viewBox="0 0 40 40">
  <path d="M21.300 15.100h-4.700a1 1 0 0 0-1 1v9a1 1 0 0 0 1 1h6a1 1 0 0 0 1-1v-1.200M21.300 15.100l2.300 2.400" fill="none" stroke="#2b2b2b" stroke-width="1.300"/>
  <path d="M18.700 17.300c.6 0 .7 1.100.5 2.400-.2 1.400-.1 2.400-.1 3.300 0 .7-.3 1.100-.6 1.100-.4 0-.6-.5-.6-1.300 0-1-.2-1.700-.2-2.800 0-1.300.4-2.700 1-2.700z" fill="#2b2b2b" stroke="#2b2b2b" stroke-width=".8"/>
  <text x="21.200" y="22.600" font-family="Liberation Sans, sans-serif" font-size="3.800" font-weight="bold" fill="#2b2b2b" opacity=".98">PG</text>
</svg></div>
<div class="tb" style="left:887.200px;top:44px"><svg width="40" height="40" viewBox="0 0 40 40">
  <path d="M21.300 15.100h-4.700a1 1 0 0 0-1 1v9a1 1 0 0 0 1 1h2.800M21.300 15.100l3 3.200" fill="none" stroke="#2b2b2b" stroke-width="1.300"/>
  <path d="M18.700 17.300c.6 0 .7 1.100.5 2.400-.2 1.400-.1 2.400-.1 3.300 0 .7-.3 1.100-.6 1.100-.4 0-.6-.5-.6-1.300 0-1-.2-1.700-.2-2.800 0-1.300.4-2.700 1-2.700z" fill="#2b2b2b" stroke="#2b2b2b" stroke-width=".8"/>
  <text x="21.400" y="23" font-family="Liberation Sans, sans-serif" font-size="3.600" fill="#2b2b2b" opacity=".98">A</text>
  <text x="20.400" y="26.500" font-family="Liberation Sans, sans-serif" font-size="3.800" font-weight="bold" fill="#2b2b2b" opacity=".98">PDF</text>
</svg></div>
<div class="tb" style="left:930.100px;top:44px"><svg width="40" height="40" viewBox="0 0 40 40">
  <g stroke="#2b2b2b" fill="none">
    <circle cx="20.200" cy="20.200" r="4.500" stroke-width="1.300"/>
    <circle cx="20.200" cy="20.200" r="2.100" stroke-width="1.100"/>
    <g stroke-width="2.100">
      <path d="M20.200 15.400v-3.200M20.200 25v3.200M15.400 20.200h-3.200M25 20.200h3.200M16.800 16.800l-2.300-2.300M23.600 23.600l2.300 2.300M16.800 23.600l-2.300 2.300M23.600 16.800l2.300-2.300"/>
    </g>
  </g>
</svg></div>
<div class="tb" style="left:973px;top:44px"><svg width="40" height="40" viewBox="0 0 40 40">
  <path d="M14.900 15h10.200l1 1v9.800h-11.200z" fill="#2b2b2b"/>
  <rect x="16.400" y="16" width="8.100" height="3.300" fill="#c3c3c3"/>
  <rect x="17.400" y="22.300" width="6.200" height="3.500" fill="#c3c3c3"/>
  <rect x="18.800" y="22.900" width="1.300" height="2.900" fill="#2b2b2b"/>
</svg></div>
<div class="tb green" style="left:1015.900px;top:44px"><svg width="40" height="40" viewBox="0 0 40 40">
  <rect x="12.700" y="14.500" width="14.100" height="13.300" fill="none" stroke="#3a4a3a" stroke-width="1"/>
  <path d="M12.200 28h15.100" stroke="#3a4a3a" stroke-width="1"/>
  <path d="M15.400 21.300h8.400M20.600 18.200l3.300 3.100-3.300 3.100" fill="none" stroke="#2f3a2f" stroke-width="1.200"/>
</svg></div>
<svg width="0" height="0" style="position:absolute"><defs>
  <linearGradient id="gi" x1="0" y1="0" x2="1" y2="0"><stop offset="0" stop-color="#525252"/><stop offset="1" stop-color="#707070"/></linearGradient>
  <linearGradient id="gi2" x1="0" y1="0" x2="0" y2="1"><stop offset="0" stop-color="#6a6a6a"/><stop offset="1" stop-color="#2e2e2e"/></linearGradient>
  <g id="icTop"><path d="M20.400 7.600c2.200 0 3.700 2.200 4.200 5.300.4 2.600-.5 4.300-1 6.500-.5 2.300 0 4.800-.1 7.500-.1 2.500-1.300 4.300-3 4.300s-2.800-1.800-2.900-4.200c-.1-2.700.1-5.100-.4-7.300-.5-2.200-1.500-3.700-1.300-6.200.3-3.300 2-5.900 4.500-5.900z" fill="url(#gi)"/></g>
  <g id="icSide"><path d="M7.100 20l8.700-.3c1.400-1.300 2.400-3.600 4.900-4.100 1.700-.3 2.600.8 4.200.9 2.600.1 5.400-.2 7.900-.2l-.9 4.600-24.800.4z" fill="#555"/><path d="M15.800 19.700c1.400-1.300 2.400-3.600 4.900-4.100 1.700-.3 2.600.8 4.200.9-3 .6-5.400 2-6.900 3.200z" fill="#3a3a3a"/><path d="M7.100 20.300l24.800-.2v1.100l-24.800.300z" fill="#777"/></g>
  <g id="icHeel"><path d="M9 12.900c1.700 3.300 4.700 5.100 8.200 5.900 4.300 1 9.300.9 13.600.6 1.500-.1 2.100-.5 2-.2l-.3 2.500c-.1.300-23.200.3-23.200 0z" fill="url(#gi2)"/></g>
  <g id="icDiag"><path d="M28.300 10c2.400-.4 3.800.8 3.200 2.600-.7 2-2.700 3.200-4.600 4.900-2.100 1.900-3.100 4.400-5.100 6.700-2.500 2.900-6.600 5.300-9.800 5-2.300-.2-3.200-2.300-2.500-4.800.9-3.200 3.500-5.100 6.400-7 3.200-2 5.400-3.800 7.800-5.500 1.500-1 3.100-1.700 4.600-1.900z" fill="url(#gi)"/></g>
</defs></svg>
<!-- row 2 left -->
<div class="tb" style="left:628px;top:88px"><svg width="40" height="40" viewBox="0 0 40 40"><use href="#icTop"/></svg></div>
<div class="tb" style="left:671px;top:88px"><svg width="40" height="40" viewBox="0 0 40 40"><use href="#icSide"/></svg></div>
<div class="tb" style="left:713.800px;top:88px"><svg width="40" height="40" viewBox="0 0 40 40"><use href="#icHeel"/></svg></div>
<div class="tb" style="left:756.700px;top:88px"><svg width="40" height="40" viewBox="0 0 40 40"><use href="#icDiag"/></svg></div>
<!-- row 2 right (mirrored) -->
<div class="tb" style="left:803px;top:88px"><svg width="40" height="40" viewBox="0 0 40 40"><use href="#icDiag" transform="translate(40.300 0) scale(-1 1)"/></svg></div>
<div class="tb" style="left:845.600px;top:88px"><svg width="40" height="40" viewBox="0 0 40 40"><use href="#icHeel" transform="translate(40.300 0) scale(-1 1)"/></svg></div>
<div class="tb" style="left:888.200px;top:88px"><svg width="40" height="40" viewBox="0 0 40 40"><use href="#icSide" transform="translate(40.300 0) scale(-1 1)"/></svg></div>
<div class="tb" style="left:931.100px;top:88px"><svg width="40" height="40" viewBox="0 0 40 40"><use href="#icTop" transform="translate(40.300 0) scale(-1 1)"/></svg></div>
<!-- small column -->
<div class="sb" style="left:802.800px;top:131.300px"><svg width="29" height="29" viewBox="0 0 29 29">
  <g transform="translate(14.300 15)"><g stroke="#2b2b2b" stroke-width="2.600"><path d="M0-5.800v11.600M-5.800 0h11.600M-4.100-4.100l8.200 8.200M-4.100 4.100l8.200-8.200"/></g><circle r="4.300" fill="#2b2b2b"/><circle r="1.900" fill="#c3c3c3"/></g>
</svg></div>
<div class="sb" style="left:802.800px;top:162.600px"><svg width="29" height="29" viewBox="0 0 29 29">
  <rect x="10" y="13.800" width="6.300" height="6.300" fill="none" stroke="#2b2b2b" stroke-width="1.300"/>
  <rect x="12.800" y="10.100" width="7.100" height="7.100" fill="#3a3a3a" stroke="#c3c3c3" stroke-width=".7"/>
</svg></div>
<div class="sb" style="left:802.800px;top:194.300px"><svg width="29" height="29" viewBox="0 0 29 29">
  <rect x="9.800" y="12.800" width="7" height="7" fill="#2e2e2e"/>
  <rect x="13.300" y="9.200" width="6.800" height="6.800" rx=".8" fill="#c3c3c3" stroke="#2e2e2e" stroke-width="1.200"/>
  <rect x="15.600" y="11.500" width="2.200" height="2.200" fill="#2e2e2e"/>
</svg></div>
<div class="sb" style="left:802.800px;top:225.200px"><svg width="29" height="29" viewBox="0 0 29 29">
  <path d="M8.100 9.400h3l.8.800h4.700v5.400h-8.500z" fill="#2d2d2d"/>
  <rect x="15.700" y="16.500" width="6" height="5.500" rx=".8" fill="#e8e8e8" stroke="#555" stroke-width=".8"/>
  <path d="M16.200 17v-1.500l1.300 1zM21.200 17v-1.500l-1.300 1z" fill="#555"/>
  <rect x="16.900" y="18.700" width="1.300" height="1.500" fill="#555"/><rect x="19.200" y="18.700" width="1.300" height="1.500" fill="#555"/>
</svg></div>
<svg width="0" height="0" style="position:absolute"><defs>
  <g id="sFoot" fill="#fff">
    <path d="M13.300 17c.6-2.600 9.500-5.200 11.900-2.600 1.400 1.500.4 4.200-1.500 6.600-1.500 1.900-3.100 3.400-2.500 5.900.5 2 2.500 3.700 2.900 6.400.4 2.900-1.200 5-3.500 5-2.400 0-4-2.100-4.300-4.900-.3-2.700.3-4.700-.2-7.600-.5-2.900-3.400-6.100-2.800-8.800z"/>
    <ellipse cx="23.600" cy="10.700" rx="1.700" ry="2.300" transform="rotate(12 23.600 10.700)"/>
    <circle cx="19.800" cy="11.200" r="1.250"/><circle cx="17.100" cy="12" r="1.050"/><circle cx="15" cy="13.200" r=".9"/><circle cx="13.500" cy="14.700" r=".75"/>
  </g>
  <g id="sSole"><path d="M4.100 0c2.200 0 3.800 2.500 3.900 6.600.1 3.300-1.500 5-1.700 7.800-.2 2.200.6 3.700.5 5.700-.1 2-1.300 3.200-2.700 3.200s-2.600-1.200-2.700-3.200c-.1-2 .5-3.500.3-5.700-.3-2.800-1.700-4.500-1.700-7.800 0-4.100 1.900-6.600 4.100-6.600z"/></g>
  <g id="sFeet" fill="#fff"><use href="#sSole" transform="translate(10.500 8.600)"/><use href="#sSole" transform="translate(29.200 8.600) scale(-1 1)"/></g>
  <g id="sSteth" fill="none" stroke="#e8e8e8" stroke-width=".9">
    <path d="M11.300 13.500c-1.600-.2-2 .6-1.800 2.200l.7 4.400c.3 1.800 1.700 2.800 3.700 2.800s3.600-.9 4.100-2.800l.9-4.400c.3-1.600-.2-2.400-1.900-2.200"/>
    <path d="M13.900 22.900c-.2 3.900 1.100 6.300 3.700 6.400 2.700.1 4-2.500 5-6 1-3.600 1.800-6.600 4-7.900"/>
    <circle cx="28.600" cy="15.300" r="1.900" fill="#fff" stroke="none"/>
  </g>
  <path id="sOut" d="M19.700 8.100c1.700 0 2.900 2.500 3.100 5.600.2 2.800-.8 4.300-1.100 6.800-.2 1.900.1 3.300.1 5.700 0 3-.8 5.200-2.200 5.200-1.600 0-2.600-2.100-2.700-5.100-.1-2.400.1-4-.3-6-.4-2.300-1-4-.8-6.700.2-3.100 1.900-5.500 3.900-5.500z"/>
  <clipPath id="sOutC"><use href="#sOut"/></clipPath>
  <g id="sHeel"><use href="#sOut" fill="none" stroke="#cfcfcf" stroke-width=".6"/><rect x="14" y="24.900" width="12" height="8" fill="#fff" clip-path="url(#sOutC)"/></g>
  <g id="sMid"><use href="#sOut" fill="none" stroke="#cfcfcf" stroke-width=".6"/><path d="M14 17.300h12l-1.500 5.700h-9z" fill="#fff" clip-path="url(#sOutC)"/></g>
  <g id="sFore"><use href="#sOut" fill="none" stroke="#cfcfcf" stroke-width=".6"/><rect x="14" y="7" width="12" height="10.600" fill="#fff" clip-path="url(#sOutC)"/></g>
  <g id="sAll"><path d="M20 10.200c1.600 0 2.800 2.100 3 4.600.2 2.300-.8 3.600-1 5.700-.2 1.600.1 2.800.1 4.700 0 2.500-.7 5-2.100 5-1.500 0-2.400-2.400-2.500-4.900-.1-2 .1-3.300-.2-5-.4-1.900-.9-3.300-.8-5.600.2-2.500 1.700-4.500 3.500-4.500z" fill="#bdbdbd"/></g>
</defs></svg>
<!-- left sidebar -->
<div class="side lt" style="left:7.200px;top:50.700px"><svg width="40" height="47" viewBox="0 0 40 47"><use href="#sFoot"/></svg></div>
<div class="side" style="left:7.200px;top:104.500px"><svg width="40" height="40" viewBox="0 0 40 40"><use href="#sFeet"/></svg></div>
<div class="side" style="left:7.200px;top:152px"><svg width="40" height="40" viewBox="0 0 40 40"><use href="#sSteth"/></svg></div>
<div class="side" style="left:7.200px;top:199.500px"><svg width="40" height="40" viewBox="0 0 40 40"><use href="#sHeel"/></svg></div>
<div class="side" style="left:7.200px;top:247px"><svg width="40" height="40" viewBox="0 0 40 40"><use href="#sMid"/></svg></div>
<div class="side" style="left:7.200px;top:294.500px"><svg width="40" height="40" viewBox="0 0 40 40"><use href="#sFore"/></svg></div>
<div class="side" style="left:7.200px;top:342px"><svg width="40" height="40" viewBox="0 0 40 40"><use href="#sAll"/></svg></div>
<!-- right sidebar (mirrored) -->
<div class="side lt" style="left:1553.300px;top:50.700px"><svg width="40" height="47" viewBox="0 0 40 47"><use href="#sFoot" transform="translate(40 0) scale(-1 1)"/></svg></div>
<div class="side" style="left:1553.300px;top:104.500px"><svg width="40" height="40" viewBox="0 0 40 40"><use href="#sFeet" transform="translate(40.400 0) scale(-1 1)"/></svg></div>
<div class="side" style="left:1553.300px;top:152px"><svg width="40" height="40" viewBox="0 0 40 40"><use href="#sSteth" transform="translate(40.400 0) scale(-1 1)"/></svg></div>
<div class="side" style="left:1553.300px;top:199.500px"><svg width="40" height="40" viewBox="0 0 40 40"><use href="#sHeel" transform="translate(40.400 0) scale(-1 1)"/></svg></div>
<div class="side" style="left:1553.300px;top:247px"><svg width="40" height="40" viewBox="0 0 40 40"><use href="#sMid" transform="translate(40.400 0) scale(-1 1)"/></svg></div>
<div class="side" style="left:1553.300px;top:294.500px"><svg width="40" height="40" viewBox="0 0 40 40"><use href="#sFore" transform="translate(40.400 0) scale(-1 1)"/></svg></div>
<div class="side" style="left:1553.300px;top:342px"><svg width="40" height="40" viewBox="0 0 40 40"><use href="#sAll" transform="translate(40.400 0) scale(-1 1)"/></svg></div>
<!-- colour scale -->
<svg style="position:absolute;left:0;top:890px" width="1600" height="10" viewBox="0 890 1600 10" shape-rendering="crispEdges">
<rect x="612.500" y="890.6" width="9.425" height="9.5" fill="#000033"/><rect x="621.875" y="890.6" width="9.425" height="9.5" fill="#00009b"/><rect x="631.250" y="890.6" width="9.425" height="9.5" fill="#3322ff"/><rect x="640.625" y="890.6" width="9.425" height="9.5" fill="#3b97d3"/><rect x="650.000" y="890.6" width="9.425" height="9.5" fill="#80ccff"/><rect x="659.375" y="890.6" width="9.425" height="9.5" fill="#004d26"/><rect x="668.750" y="890.6" width="9.425" height="9.5" fill="#008000"/><rect x="678.125" y="890.6" width="9.425" height="9.5" fill="#00ac00"/><rect x="687.500" y="890.6" width="9.425" height="9.5" fill="#00d800"/><rect x="696.875" y="890.6" width="9.425" height="9.5" fill="#00ff22"/><rect x="706.250" y="890.6" width="9.425" height="9.5" fill="#5a5200"/><rect x="715.625" y="890.6" width="9.425" height="9.5" fill="#808000"/><rect x="725.000" y="890.6" width="9.425" height="9.5" fill="#b3b000"/><rect x="734.375" y="890.6" width="9.425" height="9.5" fill="#e6e600"/><rect x="743.750" y="890.6" width="9.425" height="9.5" fill="#ffff4d"/><rect x="753.125" y="890.6" width="9.425" height="9.5" fill="#400000"/><rect x="762.500" y="890.6" width="9.425" height="9.5" fill="#990000"/><rect x="771.875" y="890.6" width="9.425" height="9.5" fill="#cc1a0d"/><rect x="781.250" y="890.6" width="9.425" height="9.5" fill="#ff3b30"/><rect x="790.625" y="890.6" width="9.425" height="9.5" fill="#ff8080"/><rect x="800.000" y="890.6" width="9.425" height="9.5" fill="#400040"/><rect x="809.375" y="890.6" width="9.425" height="9.5" fill="#800070"/><rect x="818.750" y="890.6" width="9.425" height="9.5" fill="#b300a0"/><rect x="828.125" y="890.6" width="9.425" height="9.5" fill="#ff99ff"/><rect x="837.500" y="890.6" width="9.425" height="9.5" fill="#f0cce8"/><rect x="846.875" y="890.6" width="9.425" height="9.5" fill="#000033"/><rect x="856.250" y="890.6" width="9.425" height="9.5" fill="#00009b"/><rect x="865.625" y="890.6" width="9.425" height="9.5" fill="#3322ff"/><rect x="875.000" y="890.6" width="9.425" height="9.5" fill="#3b97d3"/><rect x="884.375" y="890.6" width="9.425" height="9.5" fill="#80ccff"/><rect x="893.750" y="890.6" width="9.425" height="9.5" fill="#004d26"/><rect x="903.125" y="890.6" width="9.425" height="9.5" fill="#008000"/><rect x="912.500" y="890.6" width="9.425" height="9.5" fill="#00ac00"/><rect x="921.875" y="890.6" width="9.425" height="9.5" fill="#00d800"/><rect x="931.250" y="890.6" width="9.425" height="9.5" fill="#00ff22"/><rect x="940.625" y="890.6" width="9.425" height="9.5" fill="#5a5200"/><rect x="950.000" y="890.6" width="9.425" height="9.5" fill="#808000"/><rect x="959.375" y="890.6" width="9.425" height="9.5" fill="#b3b000"/><rect x="968.750" y="890.6" width="9.425" height="9.5" fill="#e6e600"/><rect x="978.125" y="890.6" width="9.425" height="9.5" fill="#ffff4d"/>
</svg>
<div class="lbl" style="left:612.5px">0</div>
<div class="lbl" style="left:659.4px">5</div>
<div class="lbl" style="left:706.2px">10</div>
<div class="lbl" style="left:753.1px">15</div>
<div class="lbl" style="left:800.0px">20</div>
<div class="lbl" style="left:846.9px">25</div>
<div class="lbl" style="left:893.8px">30</div>
<div class="lbl" style="left:940.6px">35</div>
<svg width="0" height="0" style="position:absolute"><defs>
  <g id="bPlate"><path d="M3.900 7l15.300-3.100 5.600 13.400-17.800 5.600z" fill="#8f8f8f"/>
    <path d="M8.200 9c1-.6 2 .5 2.300 2.200.3 1.800-.1 3.200.2 4.700.3 1.500 1.100 2.800.7 3.600-.5.800-1.400-.2-1.900-1.500-.6-1.500-.5-2.800-1-4.300-.5-1.500-1.300-4.100-.3-4.700z" fill="#fff" stroke="#fff" stroke-width=".7"/>
    <path d="M16.600 6.800c1-.5 2.200.7 2.700 2.300.5 1.600.2 2.800.6 4.100.4 1.300 1.200 2.400.7 3.100-.6.700-1.400-.3-2-1.400-.6-1.200-.6-2.300-1.200-3.600-.6-1.400-1.800-4-.8-4.500z" fill="#fff" stroke="#fff" stroke-width=".7"/>
  </g>
  <g id="bSole"><path d="M14 2.300c2 0 3.700 1.900 3.900 4.700.2 2.500-1.100 4-1.500 6.300-.4 2.200.1 4.500 0 7.200-.1 2.700-1 4.600-2.500 4.600-1.700 0-2.600-2-2.700-4.600-.1-2.700.3-4.900-.2-7.100-.5-2.200-1.400-3.600-1.300-6.100.1-2.800 2.100-5 4.300-5z" fill="#fff"/></g>
  <g id="bDiag"><path d="M3.700 6.600c.4-1.900 3.400-2.800 6.300-1.700 3 1.100 5.300 3 8.200 5 3.300 2.300 6.100 5.100 6.900 8.600.6 2.600-.4 5-2.800 5.300-2.600.4-6.400-1.500-8.700-4.200-2-2.300-2.600-5-4.700-7.200-2-2-5.600-3.800-5.200-5.800z" fill="#fff"/><path d="M7.500 8c2.500.5 4 2 5.500 4" stroke="#ddd" stroke-width="1" fill="none"/></g>
  <g id="bSheet"><path d="M3.100 10.400c2.300-.6 4.200-1.400 6.300-2.500 1.800-.9 3.200-2.200 5-2.150 1.800.05 3 1.300 5 1.550 1.700.2 3.300-.1 5-.6l-1.900 8.400c-2.200.8-4.600 1-6.900 1.600-2 .5-3.800 1-5.600 1.900-1.400.7-2.800 1.400-4.100 2.150z" fill="#fff"/></g>
  <g id="bSoleDot"><path d="M14 2c2 0 3.600 2.400 3.800 5.200.2 2.700-1.200 4.100-1.600 6.400-.4 2.200.3 4.300.2 7-.1 2.800-1.200 4.800-2.700 4.800-1.700 0-2.800-2-2.900-4.600-.1-2.700.3-4.900-.2-7.100-.5-2.200-1.100-3.700-.9-6.300.2-2.900 2.100-5.400 4.300-5.400z" fill="#fff"/><ellipse cx="12.500" cy="21.300" rx="1.400" ry="1.700" transform="rotate(25 12.500 21.300)" fill="#111"/></g>
</defs></svg>
<div class="bb" style="left:55px"><svg width="28" height="28" viewBox="0 0 28 28"><use href="#bPlate"/></svg></div>
<div class="bb" style="left:89px"><svg width="28" height="28" viewBox="0 0 28 28"><use href="#bSole"/></svg></div>
<div class="bb" style="left:123.100px"><svg width="28" height="28" viewBox="0 0 28 28"><use href="#bDiag"/></svg></div>
<div class="bb" style="left:157px"><svg width="28" height="28" viewBox="0 0 28 28"><use href="#bSheet"/></svg></div>
<div class="bb" style="left:191.250px"><svg width="28" height="28" viewBox="0 0 28 28"><use href="#bSoleDot"/></svg></div>
<div class="bb" style="left:1450px"><svg width="28" height="28" viewBox="0 0 28 28"><use href="#bPlate"/></svg></div>
<div class="bb" style="left:1484px"><svg width="28" height="28" viewBox="0 0 28 28"><use href="#bSole"/></svg></div>
<div class="bb blue" style="left:1518.200px"><svg width="28" height="28" viewBox="0 0 28 28"><use href="#bDiag"/></svg></div>
</body></html>
